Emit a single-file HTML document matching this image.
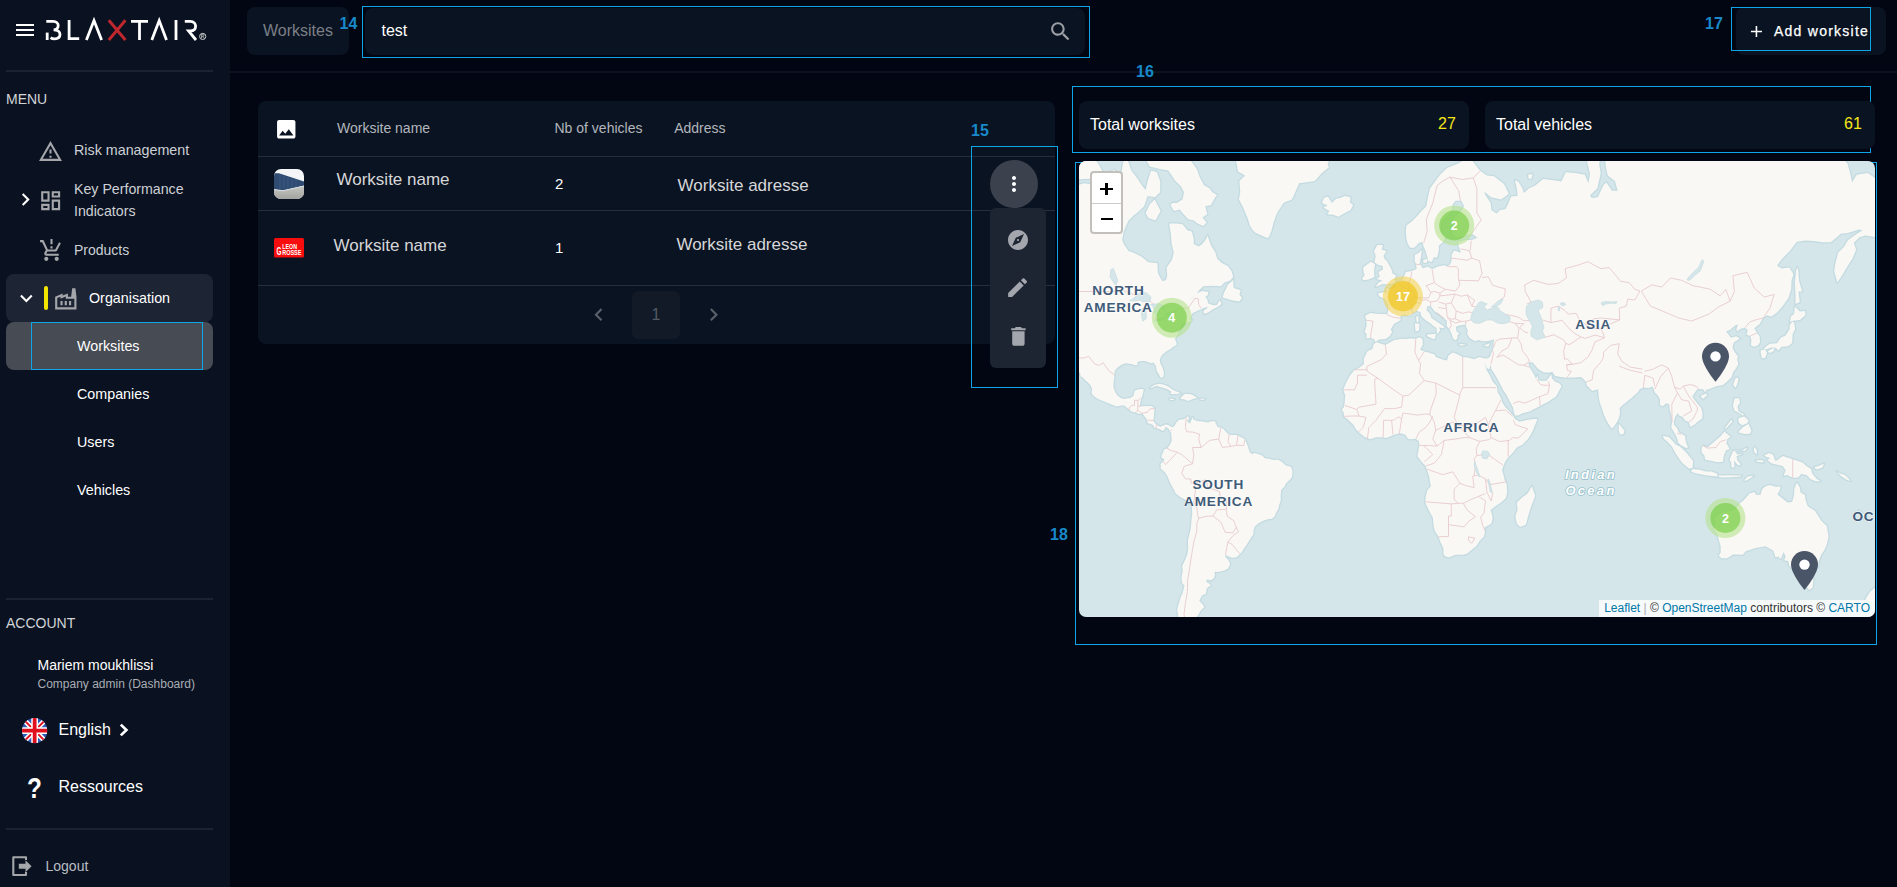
<!DOCTYPE html>
<html><head><meta charset="utf-8">
<style>
*{box-sizing:border-box;margin:0;padding:0}
html,body{width:1897px;height:887px;overflow:hidden;background:#020613;font-family:"Liberation Sans",sans-serif}
.t{position:absolute;white-space:nowrap;line-height:1}
svg.i{position:absolute;overflow:visible}
.side{position:absolute;left:0;top:0;width:230px;height:887px;background:#0a1221}
.dv{position:absolute;left:6px;width:207px;height:2px;background:#1b2230}
.bl{position:absolute;border:1.3px solid #0ea5e9}
.lb{position:absolute;font-weight:700;font-size:16px;line-height:1;color:#1889c9;white-space:nowrap}
.card{position:absolute;background:#0a1321;border-radius:8px}
.rl{position:absolute;left:258px;width:797px;height:1px;background:#272e3b}
</style></head><body>
<!-- SIDEBAR -->
<div class="side">
  <svg class="i" style="left:13px;top:18px" width="24" height="24" viewBox="0 0 24 24"><path fill="#fff" d="M3 18h18v-2H3v2zm0-5h18v-2H3v2zm0-7v2h18V6H3z"/></svg>
  <svg class="i" style="left:0;top:0" width="230" height="60" viewBox="0 0 230 60"><g fill="none" stroke="#fff" stroke-width="2.8" stroke-linecap="butt">
<path d="M46.3,21.4 H53.2 C56.4,21.4 58.2,23.4 58.2,25.6 C58.2,28 56.4,29.9 53.6,29.9 C57.6,29.9 60,31.9 60,34.6 C60,37.4 57.6,38.8 54.6,38.8 C53,38.8 51.6,38.4 50.6,37.6"/>
<path d="M47.2,32.6 V40"/>
<path d="M69.1,20 V38.6 H79.2"/>
<path d="M86.4,40 L94,20.6 L101.6,40"/>
<path d="M131,21.4 H148 M139.5,21.4 V40"/>
<path d="M151.8,40 L159.2,20.6 L166.5,40"/>
<path d="M176,20 V40"/>
<path d="M184.8,21.4 H190.2 C193.9,21.4 195.6,23.8 195.6,26.3 C195.6,28.9 193.8,31 190.4,31 H188.6 L196,40"/>
</g>
<path d="M108.8,20.2 L125.4,40 M125.4,20.2 L108.8,40" stroke="#c1272d" stroke-width="2.9" fill="none"/>
<circle cx="202.7" cy="36.4" r="3.1" fill="none" stroke="#ddd" stroke-width="0.9"/>
<path d="M201.6,38.4 V34.4 H203 C204,34.4 204.2,36.3 203,36.3 H201.6 M203,36.3 L204.2,38.4" fill="none" stroke="#ddd" stroke-width="0.7"/>
</svg>

  <div class="dv" style="top:70px"></div>
  <div class="t" style="left:6px;top:92px;font-size:14px;color:#d2d4d8">MENU</div>

  <svg class="i" style="left:38px;top:138.5px" width="25" height="25" viewBox="0 0 24 24"><path fill="#a4a6aa" d="M12 5.99L19.53 19H4.47L12 5.99M12 2L1 21h22L12 2zm1 14h-2v2h2v-2zm0-6h-2v4h2v-4z"/></svg>
  <div class="t" style="left:74px;top:143px;font-size:14.3px;color:#cdd0d5">Risk management</div>

  <svg class="i" style="left:13px;top:187.3px" width="25" height="25" viewBox="0 0 24 24"><path fill="#fff" d="M10 6L8.59 7.41 13.17 12l-4.58 4.59L10 18l6-6z"/></svg>
  <svg class="i" style="left:37.8px;top:187.6px" width="25.3" height="25.3" viewBox="0 0 24 24"><path fill="#a4a6aa" d="M19 5v2h-4V5h4M9 5v6H5V5h4m10 8v6h-4v-6h4M9 17v2H5v-2h4M21 3h-8v6h8V3zM11 3H3v10h8V3zm10 8h-8v10h8V11zm-10 4H3v6h8v-6z"/></svg>
  <div class="t" style="left:74px;top:182px;font-size:14.2px;color:#cdd0d5">Key Performance</div>
  <div class="t" style="left:74px;top:204px;font-size:14.2px;color:#cdd0d5">Indicators</div>

  <svg class="i" style="left:39px;top:238.3px" width="25" height="25" viewBox="0 0 24 24"><path fill="#a4a6aa" d="M13 10h-2V8h2v2zm0-4h-2V1h2v5zM7 18c-1.1 0-1.99.9-1.99 2S5.9 22 7 22s2-.9 2-2-.9-2-2-2zm10 0c-1.1 0-1.99.9-1.99 2s.89 2 1.99 2 2-.9 2-2-.9-2-2-2zm-8.9-5h7.45c.75 0 1.41-.41 1.75-1.03L21 4.96 19.25 4l-3.7 7H8.53L4.27 2H1v2h2l3.6 7.59-1.35 2.44C4.52 15.37 5.48 17 7 17h12v-2H7l1.1-2z"/></svg>
  <div class="t" style="left:74px;top:243px;font-size:14px;color:#cdd0d5">Products</div>

  <div style="position:absolute;left:6px;top:274px;width:207px;height:48px;background:#1d2434;border-radius:8px"></div>
  <svg class="i" style="left:13.6px;top:285.7px" width="24.7" height="24.7" viewBox="0 0 24 24"><path fill="#fff" d="M16.59 8.59L12 13.17 7.41 8.59 6 10l6 6 6-6z"/></svg>
  <div style="position:absolute;left:44px;top:286px;width:3.5px;height:24px;background:#f2e600;border-radius:2px"></div>
  <svg class="i" style="left:52.7px;top:285.6px" width="25.6" height="25.6" viewBox="0 0 24 24"><path fill="#a4a6aa" d="M22,22H2V10l7-3v2l5-2l0,3h3l1-8h3l1,8V22z M12,9.95l-5,2V10l-3,1.32V20h16v-8h-8L12,9.95z M11,18h2v-4h-2V18z M7,18h2v-4H7V18z M17,14h-2v4h2V14z"/></svg>
  <div class="t" style="left:89px;top:291px;font-size:14.3px;color:#fff">Organisation</div>

  <div style="position:absolute;left:6px;top:322px;width:207px;height:48px;background:#464b54;border-radius:8px"></div>
  <div class="bl" style="left:31px;top:322px;width:172px;height:48px"></div>
  <div class="t" style="left:77px;top:338.7px;font-size:14.3px;color:#fff">Worksites</div>
  <div class="t" style="left:77px;top:386.7px;font-size:14.3px;color:#fff">Companies</div>
  <div class="t" style="left:77px;top:434.7px;font-size:14.3px;color:#fff">Users</div>
  <div class="t" style="left:77px;top:482.7px;font-size:14.3px;color:#fff">Vehicles</div>

  <div class="dv" style="top:598px"></div>
  <div class="t" style="left:6px;top:616px;font-size:14px;color:#d2d4d8">ACCOUNT</div>
  <div class="t" style="left:37.5px;top:657.8px;font-size:14px;color:#fff">Mariem moukhlissi</div>
  <div class="t" style="left:37.5px;top:678.4px;font-size:12px;color:#a9adb4">Company admin (Dashboard)</div>

  <svg class="i" style="left:21.7px;top:717.9px" width="25.3" height="25.3" viewBox="0 0 60 60"><defs><clipPath id="fc"><circle cx="30" cy="30" r="30"/></clipPath></defs>
<g clip-path="url(#fc)"><rect width="60" height="60" fill="#2f5cba"/>
<path d="M0,0 L60,60 M60,0 L0,60" stroke="#fff" stroke-width="12"/>
<path d="M0,0 L60,60 M60,0 L0,60" stroke="#e0101f" stroke-width="4.5"/>
<path d="M30,0 V60 M0,30 H60" stroke="#fff" stroke-width="16"/>
<path d="M30,0 V60 M0,30 H60" stroke="#e0101f" stroke-width="9"/></g></svg>

  <div class="t" style="left:58.5px;top:722.2px;font-size:16px;color:#fff">English</div>
  <svg class="i" style="left:0;top:700px" width="140" height="50" viewBox="0 700 140 50"><path d="M120.8,724.6 L126.4,730 L120.8,735.4" fill="none" stroke="#fff" stroke-width="2.7"/></svg>
  <div class="t" style="left:27px;top:774px;font-size:29px;font-weight:700;color:#fff;transform:scaleX(0.84);transform-origin:0 0">?</div>
  <div class="t" style="left:58.5px;top:779.3px;font-size:16px;color:#fff">Ressources</div>

  <div class="dv" style="top:828px"></div>
  <svg class="i" style="left:0;top:840px" width="40" height="45" viewBox="0 840 40 45"><path d="M26,860 V857.3 H13.3 V875 H26 V872" fill="none" stroke="#a4a6aa" stroke-width="2.1" stroke-linejoin="round"/><path d="M18.8,863.7 H25.5 V860.2 L31.6,866.2 L25.5,872.2 V868.7 H18.8 Z" fill="#a4a6aa"/></svg>
  <div class="t" style="left:45.5px;top:859.4px;font-size:14px;color:#b9bcc2">Logout</div>
</div>

<!-- HEADER -->
<div style="position:absolute;left:230px;top:71px;width:1667px;height:2px;background:#0b1320"></div>
<div class="card" style="left:247px;top:7px;width:102px;height:48px"></div>
<div class="t" style="left:263px;top:22.5px;font-size:16px;color:#7b7f87">Worksites</div>
<div class="lb" style="left:339.5px;top:16px">14</div>
<div class="bl" style="left:362px;top:6px;width:728px;height:52px"></div>
<div class="card" style="left:365px;top:8px;width:720px;height:47px"></div>
<div class="t" style="left:381.5px;top:22.5px;font-size:16px;color:#fff">test</div>
<svg class="i" style="left:1047.9px;top:18.5px" width="25" height="25" viewBox="0 0 24 24"><path fill="#9b9ea4" d="M15.5 14h-.79l-.28-.27C15.41 12.59 16 11.110 16 9.5 16 5.91 13.09 3 9.5 3S3 5.91 3 9.5 5.91 16 9.5 16c1.61 0 3.09-.59 4.23-1.57l.27.28v.79l5 4.99L20.49 19l-4.99-5zm-6 0C7.01 14 5 11.99 5 9.5S7.01 5 9.5 5 14 7.01 14 9.5 11.99 14 9.5 14z"/></svg>

<div class="lb" style="left:1705px;top:16px">17</div>
<div class="card" style="left:1736px;top:7px;width:150px;height:48px"></div>
<div class="bl" style="left:1731px;top:7px;width:140px;height:44px"></div>
<svg class="i" style="left:1747px;top:22.1px" width="18.9" height="18.9" viewBox="0 0 24 24"><path fill="#fff" d="M19 13h-6v6h-2v-6H5v-2h6V5h2v6h6v2z"/></svg>
<div class="t" style="left:1774px;top:24.1px;font-size:14px;font-weight:400;letter-spacing:1.25px;color:#fff;-webkit-text-stroke:0.25px #fff">Add worksite</div>

<!-- TABLE -->
<div class="card" style="left:258px;top:101px;width:797px;height:243px"></div>
<svg class="i" style="left:273.7px;top:116.9px" width="24.5" height="24.5" viewBox="0 0 24 24"><path fill="#fff" d="M21 19V5c0-1.1-.9-2-2-2H5c-1.1 0-2 .9-2 2v14c0 1.1.9 2 2 2h14c1.1 0 2-.9 2-2zM8.5 13.5l2.5 3.01L14.5 12l4.5 6H5l3.5-4.5z"/></svg>
<div class="t" style="left:337px;top:121.4px;font-size:14px;color:#b3b6bc">Worksite name</div>
<div class="t" style="left:554.5px;top:121.4px;font-size:14px;color:#b3b6bc">Nb of vehicles</div>
<div class="t" style="left:674.2px;top:121.4px;font-size:14px;color:#b3b6bc">Address</div>
<div class="rl" style="top:156px"></div>
<svg class="i" style="left:274px;top:169px" width="30" height="30" viewBox="0 0 30 30"><defs><clipPath id="tc"><rect width="30" height="30" rx="7"/></clipPath><linearGradient id="tg" x1="0" y1="0" x2="0" y2="1"><stop offset="0" stop-color="#c6c6c2"/><stop offset="1" stop-color="#a3a3a0"/></linearGradient></defs>
<g clip-path="url(#tc)"><rect width="30" height="30" fill="#f3f5f7"/>
<path d="M0,4.2 L5,4.2 L30,12.5 L30,16.8 L9,21.5 L0,20.5Z" fill="#2f4b72"/>
<path d="M6,5 V21 M10,6.5 V20.5 M14,8 V19.8 M18,9.2 V19 M22,10.5 V18.4" stroke="#3d5d86" stroke-width="0.8"/>
<path d="M0,20.5 L9,21.5 L30,16.8 L30,30 L0,30Z" fill="url(#tg)"/>
<path d="M0,20.5 L9,21.8 L30,17" stroke="#d8dde0" stroke-width="1" fill="none"/>
</g></svg>

<div class="t" style="left:336.5px;top:171.2px;font-size:17px;color:#d6d7d9">Worksite name</div>
<div class="t" style="left:555px;top:175.5px;font-size:15px;color:#fff">2</div>
<div class="t" style="left:677.6px;top:177.2px;font-size:17px;color:#d6d7d9">Worksite adresse</div>
<div class="rl" style="top:210px"></div>
<svg class="i" style="left:274px;top:238px" width="30" height="19.5" viewBox="0 0 30 19.5"><rect width="30" height="19.5" rx="1.5" fill="#f70d0d"/>
<text x="8.2" y="10.8" style="font:700 7.4px 'Liberation Sans'" fill="#fff" textLength="14.8" lengthAdjust="spacingAndGlyphs">LEON</text>
<text x="2.6" y="17" style="font:700 11px 'Liberation Sans'" fill="#fff" textLength="5" lengthAdjust="spacingAndGlyphs">G</text>
<text x="8.2" y="17" style="font:700 7.6px 'Liberation Sans'" fill="#fff" textLength="19.2" lengthAdjust="spacingAndGlyphs">ROSSE</text>
</svg>

<div class="t" style="left:333.6px;top:237.2px;font-size:17px;color:#d6d7d9">Worksite name</div>
<div class="t" style="left:555px;top:240.1px;font-size:15px;color:#fff">1</div>
<div class="t" style="left:676.4px;top:236.4px;font-size:17px;color:#d6d7d9">Worksite adresse</div>
<div class="rl" style="top:285px"></div>
<svg class="i" style="left:585.8px;top:302.2px" width="25.4" height="25.4" viewBox="0 0 24 24"><path fill="#5a6069" d="M15.41 16.59L10.83 12l4.58-4.59L14 6l-6 6 6 6 1.41-1.41z"/></svg>
<div style="position:absolute;left:632px;top:291px;width:48px;height:48px;background:#111a26;border-radius:6px"></div>
<div class="t" style="left:651.5px;top:307px;font-size:16px;color:#535a64">1</div>
<svg class="i" style="left:700.5px;top:302.2px" width="25.4" height="25.4" viewBox="0 0 24 24"><path fill="#5a6069" d="M8.59 16.59L13.17 12 8.59 7.41 10 6l6 6-6 6-1.41-1.41z"/></svg>

<div class="lb" style="left:971px;top:123px">15</div>
<div class="bl" style="left:971px;top:146px;width:87px;height:242px"></div>
<div style="position:absolute;left:990px;top:160px;width:48px;height:48px;border-radius:24px;background:#3c424d"></div>
<svg class="i" style="left:1002.4px;top:172px" width="24" height="24" viewBox="0 0 24 24"><path fill="#fff" d="M12 8c1.1 0 2-.9 2-2s-.9-2-2-2-2 .9-2 2 .9 2 2 2zm0 2c-1.1 0-2 .9-2 2s.9 2 2 2 2-.9 2-2-.9-2-2-2zm0 6c-1.1 0-2 .9-2 2s.9 2 2 2 2-.9 2-2-.9-2-2-2z"/></svg>
<div style="position:absolute;left:990px;top:208px;width:56px;height:160px;background:#1d2432;border-radius:6px"></div>
<svg class="i" style="left:1006px;top:228px" width="24" height="24" viewBox="0 0 24 24"><path fill="#a3a6ac" d="M12 10.9c-.61 0-1.1.49-1.1 1.1s.49 1.1 1.1 1.1c.61 0 1.1-.49 1.1-1.1s-.49-1.1-1.1-1.1zM12 2C6.48 2 2 6.48 2 12s4.48 10 10 10 10-4.48 10-10S17.52 2 12 2zm2.19 12.19L6 18l3.81-8.19L18 6l-3.81 8.19z"/></svg>
<svg class="i" style="left:1005.3px;top:275.3px" width="25.2" height="25.2" viewBox="0 0 24 24"><path fill="#a3a6ac" d="M3 17.25V21h3.75L17.81 9.94l-3.75-3.75L3 17.25zM20.71 7.04c.39-.39.39-1.02 0-1.41l-2.34-2.34c-.39-.39-1.02-.39-1.41 0l-1.83 1.83 3.75 3.75 1.83-1.83z"/></svg>
<svg class="i" style="left:1005.5px;top:323.6px" width="24.8" height="24.8" viewBox="0 0 24 24"><path fill="#a3a6ac" d="M6 19c0 1.1.9 2 2 2h8c1.1 0 2-.9 2-2V7H6v12zM19 4h-3.5l-1-1h-5l-1 1H5v2h14V4z"/></svg>

<!-- STATS -->
<div class="lb" style="left:1136px;top:64px">16</div>
<div class="bl" style="left:1072px;top:86px;width:799px;height:67px"></div>
<div class="card" style="left:1079px;top:101px;width:390px;height:48px"></div>
<div class="t" style="left:1090px;top:116.5px;font-size:16px;color:#fff">Total worksites</div>
<div class="t" style="left:1438px;top:116.1px;font-size:16px;color:#f5e61a">27</div>
<div class="card" style="left:1485px;top:101px;width:390px;height:48px"></div>
<div class="t" style="left:1496px;top:116.5px;font-size:16px;color:#fff">Total vehicles</div>
<div class="t" style="left:1844px;top:116.1px;font-size:16px;color:#f5e61a">61</div>

<div class="lb" style="left:1050px;top:527px">18</div>
<div class="bl" style="left:1075px;top:161.5px;width:802px;height:483.5px"></div>
<div style="position:absolute;left:1079px;top:161px;width:796px;height:456px;overflow:hidden;border-radius:7px;background:#d4e6ea"><svg width="796" height="456" viewBox="0 0 796 456" style="position:absolute;left:0;top:0"><path d="M-28.7,12.1L-11.7,21.6L-0.3,23.9L5.4,22.3L16.8,23.9L25.3,26.1L33.8,25.4L39.5,21.6L42.4,12.1L45.2,-5.0L49.5,1.2L52.3,9.6L58.0,16.9L63.7,25.4L66.6,29.1L69.4,17.7L72.2,9.6L77.9,11.3L81.3,20.8L81.1,31.3L75.9,36.3L68.5,34.9L65.1,45.3L58.0,51.9L54.6,54.5L49.5,59.5L44.7,70.4L43.2,79.0L44.7,82.9L49.5,89.9L55.2,92.0L62.3,95.6L69.4,101.2L78.5,102.2L78.8,111.4L80.8,116.1L83.6,120.3L87.0,118.9L88.2,114.7L87.6,106.6L93.0,98.7L94.7,91.5L92.7,82.9L91.9,73.3L90.2,62.6L97.8,62.6L103.5,63.2L108.4,69.2L112.9,70.4L114.9,79.0L114.6,82.9L119.7,85.6L123.4,82.9L127.1,77.9L128.6,74.5L132.0,84.5L136.2,90.9L138.2,97.7L142.5,101.7L149.0,105.2L152.5,110.0L154.2,116.1L150.8,119.8L145.3,121.6L141.9,125.2L133.4,124.8L124.3,125.2L120.6,128.7L116.3,133.9L112.1,138.1L110.6,139.4L113.5,136.9L117.8,132.2L123.4,130.0L129.7,130.9L128.3,134.8L126.3,135.6L128.3,138.6L129.1,142.3L133.4,143.9L137.7,144.3L140.8,139.0L142.5,143.1L138.5,145.9L133.4,148.4L129.1,151.5L125.4,153.1L124.3,150.0L129.7,145.9L124.9,146.8L121.5,148.4L117.8,150.0L113.5,152.3L111.5,156.2L112.1,159.7L113.6,158.7L111.5,160.8L107.8,162.0L103.2,163.1L102.1,164.6L101.8,167.6L99.6,170.5L99.0,172.7L96.7,177.0L95.6,177.4L97.3,180.9L97.8,183.7L94.7,185.4L91.0,188.2L87.3,190.6L83.6,193.6L81.6,196.3L80.8,199.6L81.6,202.9L83.6,206.8L84.9,211.6L84.5,215.4L83.3,216.7L81.6,216.4L79.9,213.5L77.4,209.1L77.1,205.2L74.5,201.6L71.4,202.3L69.4,200.9L65.7,200.0L61.7,200.0L58.3,200.9L58.6,203.9L56.0,204.2L52.3,202.9L46.6,202.3L42.9,203.6L38.1,207.1L35.6,210.3L35.6,214.5L34.7,219.8L34.4,225.7L36.1,230.9L38.7,234.8L41.8,236.9L44.7,238.1L48.6,237.2L51.5,236.9L54.6,234.5L55.5,230.0L57.7,228.8L61.7,227.9L64.8,228.2L64.0,232.1L63.1,236.0L62.0,237.8L61.7,240.2L60.6,245.0L63.4,245.3L68.3,245.0L72.8,245.3L75.7,247.6L75.1,252.0L74.8,256.7L74.2,259.3L75.9,262.2L78.8,264.5L81.1,265.7L84.5,264.5L86.5,263.4L89.3,263.9L92.4,266.0L94.1,266.2L95.9,264.2L97.6,261.3L99.3,259.3L101.5,258.4L104.1,258.4L107.2,256.7L108.7,255.3L110.4,257.6L108.1,259.3L108.9,261.1L110.6,262.8L112.1,259.9L113.5,255.8L114.1,258.2L118.0,259.9L124.0,260.5L129.1,261.6L132.0,260.2L136.2,260.2L136.8,262.8L139.1,266.2L141.9,266.5L144.8,268.3L147.1,271.1L150.2,273.7L153.6,274.0L157.6,274.0L160.7,275.4L163.8,277.1L166.1,278.8L167.5,282.3L169.0,285.7L170.1,289.4L170.4,290.8L173.2,293.4L174.6,291.9L177.5,292.5L183.2,294.5L186.3,297.6L189.2,297.6L194.6,299.1L199.1,298.8L203.1,301.0L206.8,304.5L210.2,305.3L212.5,306.5L213.6,311.6L212.8,316.5L210.8,318.8L207.1,322.3L205.4,325.8L202.2,328.7L201.7,333.4L201.7,339.9L200.2,343.8L199.4,348.0L197.1,351.6L196.0,355.0L193.1,357.7L189.7,358.1L185.5,359.3L182.6,360.5L178.9,362.7L175.5,365.9L174.6,369.0L174.4,373.5L172.4,376.1L169.8,380.3L167.8,383.6L165.3,387.0L163.0,391.0L160.4,393.4L158.4,395.8L155.0,396.8L151.9,396.5L148.5,395.1L146.5,393.7L146.2,395.8L149.0,398.6L150.5,401.7L151.3,402.8L149.0,407.5L145.3,409.6L139.1,411.1L135.4,410.7L136.0,414.0L135.1,417.0L132.0,419.3L127.7,418.5L127.4,421.1L130.6,422.7L131.7,425.0L129.1,426.1L127.7,427.7L126.9,432.8L122.9,434.4L120.3,439.7L123.4,443.0L125.4,446.0L121.5,449.8L119.7,453.3L117.5,456.4L116.3,460.0L118.3,465.9L119.2,478.9L99.3,478.9L99.3,455.5L98.1,449.0L99.8,442.6L101.5,436.5L103.8,431.6L105.5,424.6L103.0,421.9L102.4,417.0L103.8,409.6L103.2,404.9L106.1,398.9L108.4,393.1L109.2,387.0L108.9,380.3L109.8,375.4L111.2,370.6L112.1,364.3L112.4,359.6L113.2,353.4L112.9,345.9L112.4,343.8L109.2,340.8L105.0,338.1L100.7,335.7L96.7,332.5L95.3,329.6L93.0,325.2L90.7,320.8L88.5,315.6L86.2,311.6L83.6,309.3L81.6,307.6L81.9,304.8L81.3,303.3L84.2,300.5L85.6,297.9L82.5,297.1L82.5,294.2L83.9,291.7L85.0,288.5L87.9,287.4L89.3,286.0L91.0,283.4L92.7,280.0L92.4,275.1L92.2,271.7L90.7,270.0L89.6,267.7L86.5,265.4L86.2,267.4L83.9,270.0L81.6,268.8L78.8,267.4L74.8,266.5L74.5,264.2L71.1,262.8L68.8,262.2L68.3,259.6L66.8,257.0L64.3,253.8L63.4,252.3L60.6,252.9L57.7,252.0L54.6,250.9L52.0,250.3L50.1,248.8L47.5,246.2L45.2,244.4L42.4,244.4L38.4,245.6L35.0,244.4L31.9,243.2L28.2,241.7L23.9,239.9L20.2,238.4L17.9,237.2L15.4,235.4L12.8,232.7L12.8,229.7L13.1,227.9L11.7,224.8L9.4,222.0L6.0,218.9L4.0,216.4L1.7,215.4L1.1,212.3L-1.7,209.1L-3.7,207.8L-7.4,202.9L-13.9,195.6L-43.0,184.4L-43.0,12.1ZM404.5,197.3L400.8,196.0L397.9,197.0L395.1,198.3L389.4,196.6L383.7,196.0L378.0,193.0L373.8,191.6L369.5,194.6L368.1,199.6L363.8,198.6L356.7,196.0L355.8,193.6L349.6,191.6L345.3,190.6L341.0,188.5L343.9,183.7L343.6,178.1L340.5,176.3L336.8,177.7L331.1,177.4L326.8,178.1L321.1,178.1L315.4,179.1L309.8,182.0L306.3,184.1L297.5,181.3L295.0,182.7L293.3,187.9L288.4,190.2L284.7,198.0L285.0,202.9L279.9,207.1L275.6,209.1L271.4,213.9L267.4,221.1L264.2,228.8L266.2,234.2L265.7,241.7L264.8,246.2L262.8,248.5L264.8,252.0L265.1,255.8L268.5,257.9L271.1,260.8L274.8,264.2L277.0,268.5L280.7,272.0L285.6,276.0L291.3,278.3L297.0,276.3L302.6,276.3L307.5,277.1L314.0,274.3L318.3,272.8L322.6,272.6L326.3,273.7L329.1,278.0L332.5,278.3L336.8,277.7L339.6,280.0L340.5,283.7L339.6,288.0L339.1,292.2L338.2,295.1L342.5,300.8L346.2,304.5L347.6,307.9L350.1,315.1L351.0,320.8L351.9,325.2L348.2,329.6L346.7,335.4L346.2,341.4L349.6,348.9L353.8,356.5L354.7,365.9L356.1,370.6L359.5,375.8L361.8,382.0L364.4,387.0L364.4,392.0L365.2,394.8L369.5,396.5L376.6,393.7L383.7,393.7L388.0,392.7L392.2,389.3L397.9,384.6L400.8,379.7L405.0,375.4L406.2,369.0L405.3,366.8L412.2,362.7L413.6,358.1L413.0,353.4L411.6,348.9L416.4,345.3L422.1,341.4L426.9,336.9L428.1,332.5L427.8,323.7L425.8,319.4L424.4,313.6L423.0,309.3L424.4,305.0L426.4,300.2L429.2,296.5L433.5,292.2L437.8,286.5L443.4,283.7L449.1,278.0L453.4,270.8L456.2,263.7L458.5,257.9L454.8,257.9L449.1,258.7L440.6,260.8L436.0,257.9L434.3,255.0L430.6,250.6L426.4,246.2L423.5,241.7L422.1,237.2L418.7,231.2L417.8,225.1L413.6,220.4L410.7,214.2L407.9,209.4L405.3,201.6ZM386.0,-1.4L378.0,2.9L368.1,7.1L361.0,13.7L355.3,21.6L351.0,27.6L349.0,36.3L347.3,45.3L342.5,49.9L338.2,55.1L332.5,60.8L327.4,64.4L326.8,70.4L327.4,77.3L328.5,82.3L331.1,86.7L335.4,86.7L339.6,82.3L342.8,80.7L343.9,82.3L344.5,85.6L346.4,89.4L348.2,95.6L349.3,100.2L353.0,100.7L354.7,96.6L358.1,96.6L359.8,89.9L359.8,84.5L364.7,80.7L366.4,75.0L361.8,70.4L362.1,61.4L368.1,55.1L372.3,50.6L373.8,43.3L376.6,39.8L382.3,39.8L385.1,45.3L382.3,49.9L376.6,55.1L373.2,59.5L373.8,68.6L373.2,73.3L376.6,76.2L380.9,76.2L388.0,73.9L393.7,73.3L398.5,76.7L392.8,79.0L386.6,79.0L379.4,80.7L379.4,84.5L382.0,91.5L380.9,91.5L375.2,89.4L372.6,93.6L372.6,99.2L371.2,103.2L368.1,105.6L365.5,104.2L359.5,105.2L353.3,108.1L348.2,105.6L343.9,107.6L342.5,104.7L340.5,103.2L341.9,96.6L342.8,88.8L339.6,92.0L335.9,93.6L335.6,99.7L337.1,103.2L337.6,108.1L332.5,110.0L326.8,110.9L325.4,114.7L322.8,119.8L319.7,121.2L317.2,122.1L316.9,125.2L313.2,127.4L309.5,128.7L308.9,127.4L307.2,127.4L308.0,131.8L304.1,131.3L298.9,132.6L300.4,135.6L305.5,137.7L306.9,139.8L309.2,143.9L309.2,149.2L308.3,153.1L302.6,153.1L297.0,152.7L291.3,151.9L286.1,154.7L287.3,158.9L287.6,164.6L285.6,170.9L287.6,173.1L287.3,177.4L291.6,176.7L294.7,178.1L296.7,180.9L299.8,178.4L306.6,178.1L310.6,175.2L313.2,170.9L311.7,168.3L315.2,162.7L321.7,159.3L321.4,155.1L325.4,153.5L331.1,154.7L333.9,151.9L337.6,149.6L341.6,151.5L342.5,155.5L346.7,159.3L351.0,162.0L355.3,165.7L357.3,166.8L358.1,172.0L357.0,173.8L359.5,172.0L361.2,168.7L359.8,166.5L364.9,167.2L365.2,165.7L358.1,160.8L352.4,157.0L351.3,153.1L347.6,149.2L347.9,145.5L351.6,144.7L353.0,146.8L355.8,150.4L359.5,153.1L365.2,157.4L367.8,159.7L367.8,165.3L370.3,168.3L372.6,172.7L374.0,177.4L376.6,179.5L378.6,177.0L378.3,173.8L380.9,173.1L377.5,170.2L376.9,165.7L380.3,164.6L386.6,163.5L387.1,165.3L387.4,166.5L388.8,169.4L388.0,172.3L390.3,176.7L392.2,178.1L396.5,180.2L399.4,179.1L403.6,180.2L409.3,179.9L413.6,178.8L415.3,178.1L414.4,182.7L414.7,186.1L413.6,189.6L412.4,191.9L410.7,196.3L407.9,197.6L404.5,197.3L405.3,201.6L407.9,207.1L410.2,208.4L411.9,202.9L412.2,207.8L416.4,214.2L419.3,219.5L423.0,226.6L424.1,229.1L427.8,234.2L430.6,240.2L433.8,245.9L435.8,254.4L439.2,254.4L443.4,252.3L450.6,250.6L456.2,247.6L461.1,245.0L464.8,242.9L469.6,240.5L473.6,237.8L476.7,236.0L479.3,231.5L482.7,225.1L479.9,222.0L476.2,220.8L473.0,217.6L472.5,213.5L470.5,215.7L467.6,219.8L461.9,219.8L459.4,219.5L458.5,213.9L457.1,217.9L455.4,214.2L453.4,210.7L450.6,206.2L449.1,201.6L453.4,201.3L456.2,204.5L459.1,208.1L464.8,211.6L470.5,211.6L473.3,210.7L476.2,215.1L481.8,216.1L487.5,216.7L494.6,216.4L501.8,216.1L504.6,217.9L506.9,221.1L508.3,225.7L509.2,225.4L513.1,230.0L517.4,228.8L519.1,228.2L519.7,235.7L520.8,241.7L522.5,246.2L524.8,253.5L526.8,257.9L529.3,262.8L533.0,267.7L535.0,265.4L537.9,261.3L539.6,257.9L541.0,252.6L540.7,247.0L544.4,243.5L546.7,241.7L551.5,237.8L556.7,233.3L559.8,230.3L560.6,228.2L564.3,226.6L569.5,226.9L573.7,225.4L574.9,229.1L576.0,231.8L578.8,234.2L581.1,238.7L580.8,244.1L584.0,245.3L587.1,242.3L590.2,243.2L590.8,249.1L592.5,255.0L593.1,261.3L592.2,266.5L595.6,272.3L597.9,276.6L599.3,281.7L601.3,283.7L607.0,287.1L609.0,286.5L606.7,280.3L606.1,275.1L602.7,272.8L599.9,271.4L597.9,266.8L595.1,263.9L594.8,259.9L596.8,255.0L598.8,252.0L599.9,254.4L603.9,256.1L605.6,259.3L609.8,261.1L611.3,266.0L615.5,263.7L618.4,261.1L623.2,257.6L623.5,252.0L622.1,246.8L618.1,242.3L615.5,238.7L613.3,235.7L616.1,231.2L618.4,228.2L621.2,227.9L624.6,228.5L626.1,231.8L626.9,229.1L630.6,227.9L635.4,226.0L638.3,225.1L644.0,223.9L646.8,221.7L650.2,218.6L652.8,215.7L653.9,211.6L656.8,207.8L659.3,202.9L658.2,198.6L659.1,195.6L656.2,191.9L653.4,186.8L654.8,181.6L660.8,177.4L657.3,175.2L651.9,176.7L649.7,173.8L647.1,170.2L650.8,169.1L656.2,164.6L659.1,163.5L657.3,168.3L658.5,170.5L661.0,167.9L665.9,166.8L668.7,168.7L667.6,173.8L671.3,174.9L672.4,179.1L671.9,184.4L675.3,185.8L679.5,184.1L681.0,180.9L680.7,175.6L678.1,172.0L675.3,167.2L681.0,162.7L683.8,157.0L688.1,154.3L692.3,155.8L698.0,151.5L703.7,145.1L709.4,136.9L712.2,128.3L712.5,119.3L714.5,113.3L710.3,106.6L702.9,107.6L698.0,104.7L702.3,98.7L710.8,89.9L717.9,80.7L726.5,79.6L735.0,80.1L743.5,81.2L751.8,81.2L757.8,76.2L761.7,72.7L768.8,71.9L779.7,68.6L783.6,69.2L776.2,73.9L769.1,79.0L764.9,86.1L759.2,91.5L756.3,102.7L755.2,110.0L758.3,121.6L762.9,114.7L767.7,106.6L773.4,97.7L777.1,88.8L774.8,81.8L780.5,76.2L786.2,74.5L797.0,76.2L807.5,65.6L824.6,45.3L824.6,23.9L810.4,20.0L797.0,17.7L788.8,12.1L777.7,13.7L773.1,21.6L771.1,12.1L768.3,2.0L753.5,-9.5L739.3,-9.5L682.4,-9.5L625.5,-29.0L540.2,-19.0L525.9,-14.2L525.9,-5.0L526.8,6.3L528.8,14.5L535.9,20.0L538.7,29.8L533.0,29.8L527.4,21.6L524.5,23.9L518.8,36.3L512.6,37.0L511.1,34.2L518.3,27.6L521.7,12.1L520.2,3.8L521.1,-5.0L518.8,-19.0L513.1,-17.0L508.0,0.3L511.0,12.9L509.4,22.3L505.9,13.7L496.1,12.1L486.7,11.3L482.4,20.4L474.7,19.2L464.2,18.1L456.2,24.6L449.7,27.6L444.9,32.0L443.2,26.9L439.5,20.8L435.8,19.2L437.8,26.9L438.6,34.9L432.1,35.6L428.7,43.9L426.4,48.0L420.7,49.3L417.8,52.5L412.4,49.3L411.6,41.9L406.5,34.2L405.0,30.6L412.2,36.3L422.1,38.4L429.8,32.7L425.0,23.1L415.0,15.3L407.9,14.5L400.8,9.6L393.7,0.3ZM-23.0,16.1L-6.0,18.5L11.1,17.7L19.6,16.9L24.7,12.9L21.0,5.5L13.9,-5.0L-0.3,-9.5L-23.0,-19.0ZM28.7,19.2L39.5,20.8L41.0,13.7L35.3,8.8L29.6,12.1ZM91.3,43.9L95.0,49.9L100.7,48.6L103.5,51.9L109.2,58.3L114.9,59.5L118.6,62.6L124.3,65.0L127.7,61.4L123.4,56.4L128.3,53.2L126.3,45.3L132.0,43.9L136.2,36.3L138.2,34.2L133.4,31.3L130.6,27.6L124.9,23.9L120.6,16.1L117.8,8.0L113.5,2.0L107.8,-5.0L90.7,-19.0L56.6,-19.0L70.8,5.5L80.8,8.0L89.3,9.6L96.4,20.0L102.1,25.4L105.0,31.3L103.5,38.4L97.8,41.9L93.6,41.9ZM66.6,51.9L70.8,43.3L75.7,38.4L81.6,49.9L76.5,59.5L69.4,57.0ZM105.0,-76.3L119.2,-51.0L124.9,-45.2L147.6,-45.2L153.3,-19.0L156.2,-5.0L159.0,10.4L166.1,14.5L160.4,20.0L161.3,31.3L159.9,38.4L163.6,45.3L165.8,50.6L169.0,58.3L170.9,64.4L173.8,69.2L176.1,71.6L184.6,75.6L188.9,77.3L190.3,75.0L192.3,70.4L194.6,61.4L198.0,51.9L204.5,41.9L205.9,41.2L213.0,38.4L220.2,22.3L235.8,20.0L242.9,12.1L250.0,6.3L248.6,3.8L251.4,-5.0L255.7,-76.3ZM242.9,41.9L244.9,37.0L248.9,35.6L252.9,41.9L257.1,37.7L261.4,37.0L265.7,34.9L271.4,36.3L270.8,41.2L274.2,43.9L271.4,49.3L267.1,51.2L259.4,55.7L254.3,53.8L248.0,53.2L250.6,49.9L244.3,46.6L248.6,44.6ZM143.6,136.5L153.9,139.4L160.4,140.6L163.0,136.9L160.4,133.5L161.8,129.2L154.7,127.0L154.2,118.9L149.0,123.4L144.8,132.2ZM71.1,226.9L75.1,223.9L79.4,222.9L83.6,223.2L89.3,225.4L93.0,228.2L97.3,230.6L101.8,232.1L97.8,233.0L91.6,233.0L92.2,230.6L87.9,227.9L82.2,226.3L77.1,224.8L72.8,226.9ZM101.0,237.5L105.5,233.0L110.6,233.0L113.8,233.9L118.3,236.9L113.5,238.1L109.5,239.9L105.5,238.4L101.0,237.8ZM89.9,237.8L95.6,238.1L93.9,239.0L91.3,239.0ZM121.5,237.5L126.0,237.8L124.9,238.7L121.5,238.7ZM296.4,126.1L300.7,124.3L304.1,123.0L308.3,123.4L315.4,122.1L316.6,120.3L315.2,118.0L317.4,114.7L313.5,112.4L312.9,109.5L310.9,105.2L308.0,100.2L305.5,97.7L304.4,95.1L307.5,89.9L302.6,88.8L303.8,84.0L298.4,84.0L295.0,89.9L296.7,95.1L295.5,101.2L298.7,103.7L303.5,104.7L304.1,108.6L299.5,110.9L300.1,113.3L300.7,115.7L297.5,118.0L301.2,118.9L303.8,119.8L299.8,121.2ZM295.5,116.1L295.0,110.5L295.5,106.6L296.1,103.2L291.8,100.7L288.4,103.2L284.2,106.6L284.4,110.5L285.6,114.3L283.0,117.5L284.7,119.3L289.8,118.4L294.1,116.6ZM347.9,173.4L357.0,172.7L355.6,178.4L348.2,175.2ZM335.9,162.3L340.5,162.7L339.9,169.8L336.5,170.5ZM337.1,155.5L339.3,155.1L339.6,161.2L337.6,160.5ZM379.4,182.7L387.4,183.7L382.3,184.8ZM404.5,184.4L411.0,182.3L409.3,185.8ZM449.1,13.7L453.4,12.9L452.5,17.7L449.7,17.7ZM343.9,99.2L348.4,97.7L347.9,101.7L344.7,101.7ZM452.8,325.2L456.2,334.8L454.3,339.9L452.5,344.4L449.1,355.0L446.9,363.7L441.2,365.9L437.8,362.7L436.3,355.0L438.6,348.9L437.8,341.4L443.4,336.3L448.6,332.5L450.6,329.0ZM539.9,262.8L543.0,266.5L545.6,270.0L544.4,273.1L541.0,273.7L539.6,269.4ZM656.8,216.4L659.6,217.3L658.2,223.5L656.2,226.9L654.2,223.5ZM621.5,235.1L626.9,232.4L628.3,233.9L624.1,238.1ZM684.9,187.9L686.6,185.8L690.9,182.7L698.0,182.3L701.7,176.7L706.6,174.5L710.5,168.3L710.8,164.2L713.1,160.8L715.1,161.6L716.2,168.3L713.7,172.7L713.4,177.7L713.1,182.0L710.3,184.4L707.4,185.4L702.3,185.8L699.4,189.6L696.9,186.8L692.3,186.5L687.5,188.2ZM710.8,160.8L712.2,155.1L715.1,153.1L715.9,145.5L720.8,150.4L725.9,150.0L726.5,153.9L720.8,158.9L714.2,159.7ZM681.5,189.6L685.8,188.2L688.1,191.9L686.1,197.0L682.9,197.3L681.8,192.3ZM688.6,190.6L692.3,187.9L695.7,187.2L694.6,190.2L690.9,191.9ZM716.5,143.1L720.8,141.0L719.4,130.5L723.1,130.5L719.9,119.3L719.4,110.0L718.2,106.1L717.1,110.0L715.9,121.6L716.5,134.8ZM655.6,237.2L660.2,237.2L661.0,241.7L658.5,245.3L659.6,250.6L665.3,253.5L663.9,254.4L659.6,251.7L655.6,249.7L653.9,244.7ZM659.6,270.8L663.9,266.2L669.6,263.1L672.4,269.4L671.0,272.8L665.3,273.1L659.6,271.4ZM659.6,257.0L665.3,255.5L669.6,259.3L668.2,262.2L663.3,264.2L661.0,262.8L659.3,260.8ZM646.0,267.1L652.5,258.4L653.4,260.5L646.8,268.0ZM622.6,286.5L624.4,284.8L628.3,286.5L634.0,281.7L641.1,275.7L645.4,270.8L651.7,275.7L648.2,278.0L647.4,282.3L650.8,288.0L646.8,289.4L644.8,295.1L644.0,300.8L638.3,301.3L629.8,299.3L626.1,298.8L625.5,294.5L622.6,291.4ZM583.7,274.8L589.9,276.0L597.0,283.7L601.3,285.7L607.9,292.2L611.3,296.5L614.1,299.9L613.5,307.3L609.8,307.6L603.6,302.2L599.3,296.5L595.6,290.8L593.1,285.7L588.5,280.8L585.1,278.0ZM611.8,310.2L614.1,307.9L620.7,308.8L626.9,310.5L632.6,310.5L638.3,312.8L638.3,315.6L628.3,314.5L619.8,313.1L615.5,311.9ZM639.7,314.2L642.6,314.5L651.1,314.2L655.4,314.5L662.5,314.5L661.9,315.6L652.5,316.2L644.0,316.5L639.7,315.9ZM665.3,319.1L668.7,315.4L674.7,314.8L671.0,317.4L666.2,320.0ZM652.5,306.5L655.4,306.5L655.1,299.3L658.2,303.6L659.6,304.5L661.9,303.6L658.2,299.3L657.6,295.1L662.5,293.6L663.3,293.1L658.2,293.4L655.4,289.4L662.5,289.4L668.2,286.5L666.7,289.4L654.5,289.9L653.4,291.4L650.5,298.8L652.2,301.6ZM675.3,285.7L677.3,288.0L678.1,293.1L676.1,292.2L674.7,289.4ZM676.7,299.3L683.8,299.3L684.7,301.6L678.1,300.8ZM685.2,294.5L689.5,291.9L693.8,293.4L696.6,300.2L703.7,295.1L713.7,298.2L723.6,301.6L727.3,305.0L732.2,307.9L733.0,312.2L737.8,317.9L741.5,320.3L736.4,320.3L731.3,317.9L727.9,314.2L722.2,312.8L719.4,316.5L713.7,316.8L708.0,313.9L704.6,314.8L706.6,309.3L703.7,305.0L697.2,303.6L692.3,302.2L688.1,298.8L691.5,297.3L686.6,295.4ZM735.0,306.5L739.3,305.0L745.0,302.8L743.5,306.5L737.8,308.5ZM757.8,310.2L760.6,312.2L766.3,314.2L770.0,317.9L771.4,320.0L767.7,318.8L762.0,315.1ZM779.7,349.5L783.4,351.9L787.6,355.9L786.2,356.5L781.4,352.8ZM635.4,356.5L637.4,354.4L644.0,351.0L650.5,349.8L656.8,347.4L660.5,342.6L663.9,339.9L666.7,336.9L670.4,332.5L675.3,331.0L677.3,334.0L681.5,333.7L683.2,328.1L686.6,325.2L690.9,324.0L696.6,325.8L701.7,325.5L700.9,329.0L698.3,333.4L702.3,336.6L708.5,341.4L713.1,341.1L715.1,334.0L715.4,327.2L717.9,321.4L720.8,326.6L721.6,331.6L725.9,334.0L726.5,338.4L728.7,345.3L735.9,349.8L739.3,355.0L742.1,359.6L747.8,364.9L749.5,375.4L747.8,383.6L745.0,389.7L742.1,393.7L739.8,400.0L739.0,406.0L733.6,407.1L729.3,411.4L725.0,408.9L720.8,410.7L713.7,408.2L710.0,404.2L709.4,400.0L705.1,399.3L706.6,395.8L704.6,391.0L701.7,397.9L699.4,395.5L696.6,396.5L694.3,389.7L686.6,385.3L676.7,387.0L666.7,390.3L663.9,393.7L653.9,393.4L648.2,397.2L642.6,397.2L639.7,394.8L641.7,391.4L641.7,385.3L639.7,378.7L638.6,373.8L634.9,368.4L636.3,362.7ZM724.2,417.7L734.4,418.1L733.6,426.5L730.2,428.9L725.9,423.8ZM803.8,395.1L809.0,400.0L812.9,405.3L820.3,406.7L816.1,412.2L813.2,418.9L810.4,420.8L809.2,414.4L807.0,412.2L809.0,406.0L804.7,398.9ZM803.6,417.0L808.1,419.6L806.1,425.4L801.8,430.5L799.6,432.4L797.6,438.1L793.3,441.0L786.2,438.5L791.3,430.5L797.6,425.4L801.8,418.9Z" fill="none" stroke="#c3dbe1" stroke-width="2.6" stroke-linejoin="round"/><path d="M-28.7,12.1L-11.7,21.6L-0.3,23.9L5.4,22.3L16.8,23.9L25.3,26.1L33.8,25.4L39.5,21.6L42.4,12.1L45.2,-5.0L49.5,1.2L52.3,9.6L58.0,16.9L63.7,25.4L66.6,29.1L69.4,17.7L72.2,9.6L77.9,11.3L81.3,20.8L81.1,31.3L75.9,36.3L68.5,34.9L65.1,45.3L58.0,51.9L54.6,54.5L49.5,59.5L44.7,70.4L43.2,79.0L44.7,82.9L49.5,89.9L55.2,92.0L62.3,95.6L69.4,101.2L78.5,102.2L78.8,111.4L80.8,116.1L83.6,120.3L87.0,118.9L88.2,114.7L87.6,106.6L93.0,98.7L94.7,91.5L92.7,82.9L91.9,73.3L90.2,62.6L97.8,62.6L103.5,63.2L108.4,69.2L112.9,70.4L114.9,79.0L114.6,82.9L119.7,85.6L123.4,82.9L127.1,77.9L128.6,74.5L132.0,84.5L136.2,90.9L138.2,97.7L142.5,101.7L149.0,105.2L152.5,110.0L154.2,116.1L150.8,119.8L145.3,121.6L141.9,125.2L133.4,124.8L124.3,125.2L120.6,128.7L116.3,133.9L112.1,138.1L110.6,139.4L113.5,136.9L117.8,132.2L123.4,130.0L129.7,130.9L128.3,134.8L126.3,135.6L128.3,138.6L129.1,142.3L133.4,143.9L137.7,144.3L140.8,139.0L142.5,143.1L138.5,145.9L133.4,148.4L129.1,151.5L125.4,153.1L124.3,150.0L129.7,145.9L124.9,146.8L121.5,148.4L117.8,150.0L113.5,152.3L111.5,156.2L112.1,159.7L113.6,158.7L111.5,160.8L107.8,162.0L103.2,163.1L102.1,164.6L101.8,167.6L99.6,170.5L99.0,172.7L96.7,177.0L95.6,177.4L97.3,180.9L97.8,183.7L94.7,185.4L91.0,188.2L87.3,190.6L83.6,193.6L81.6,196.3L80.8,199.6L81.6,202.9L83.6,206.8L84.9,211.6L84.5,215.4L83.3,216.7L81.6,216.4L79.9,213.5L77.4,209.1L77.1,205.2L74.5,201.6L71.4,202.3L69.4,200.9L65.7,200.0L61.7,200.0L58.3,200.9L58.6,203.9L56.0,204.2L52.3,202.9L46.6,202.3L42.9,203.6L38.1,207.1L35.6,210.3L35.6,214.5L34.7,219.8L34.4,225.7L36.1,230.9L38.7,234.8L41.8,236.9L44.7,238.1L48.6,237.2L51.5,236.9L54.6,234.5L55.5,230.0L57.7,228.8L61.7,227.9L64.8,228.2L64.0,232.1L63.1,236.0L62.0,237.8L61.7,240.2L60.6,245.0L63.4,245.3L68.3,245.0L72.8,245.3L75.7,247.6L75.1,252.0L74.8,256.7L74.2,259.3L75.9,262.2L78.8,264.5L81.1,265.7L84.5,264.5L86.5,263.4L89.3,263.9L92.4,266.0L94.1,266.2L95.9,264.2L97.6,261.3L99.3,259.3L101.5,258.4L104.1,258.4L107.2,256.7L108.7,255.3L110.4,257.6L108.1,259.3L108.9,261.1L110.6,262.8L112.1,259.9L113.5,255.8L114.1,258.2L118.0,259.9L124.0,260.5L129.1,261.6L132.0,260.2L136.2,260.2L136.8,262.8L139.1,266.2L141.9,266.5L144.8,268.3L147.1,271.1L150.2,273.7L153.6,274.0L157.6,274.0L160.7,275.4L163.8,277.1L166.1,278.8L167.5,282.3L169.0,285.7L170.1,289.4L170.4,290.8L173.2,293.4L174.6,291.9L177.5,292.5L183.2,294.5L186.3,297.6L189.2,297.6L194.6,299.1L199.1,298.8L203.1,301.0L206.8,304.5L210.2,305.3L212.5,306.5L213.6,311.6L212.8,316.5L210.8,318.8L207.1,322.3L205.4,325.8L202.2,328.7L201.7,333.4L201.7,339.9L200.2,343.8L199.4,348.0L197.1,351.6L196.0,355.0L193.1,357.7L189.7,358.1L185.5,359.3L182.6,360.5L178.9,362.7L175.5,365.9L174.6,369.0L174.4,373.5L172.4,376.1L169.8,380.3L167.8,383.6L165.3,387.0L163.0,391.0L160.4,393.4L158.4,395.8L155.0,396.8L151.9,396.5L148.5,395.1L146.5,393.7L146.2,395.8L149.0,398.6L150.5,401.7L151.3,402.8L149.0,407.5L145.3,409.6L139.1,411.1L135.4,410.7L136.0,414.0L135.1,417.0L132.0,419.3L127.7,418.5L127.4,421.1L130.6,422.7L131.7,425.0L129.1,426.1L127.7,427.7L126.9,432.8L122.9,434.4L120.3,439.7L123.4,443.0L125.4,446.0L121.5,449.8L119.7,453.3L117.5,456.4L116.3,460.0L118.3,465.9L119.2,478.9L99.3,478.9L99.3,455.5L98.1,449.0L99.8,442.6L101.5,436.5L103.8,431.6L105.5,424.6L103.0,421.9L102.4,417.0L103.8,409.6L103.2,404.9L106.1,398.9L108.4,393.1L109.2,387.0L108.9,380.3L109.8,375.4L111.2,370.6L112.1,364.3L112.4,359.6L113.2,353.4L112.9,345.9L112.4,343.8L109.2,340.8L105.0,338.1L100.7,335.7L96.7,332.5L95.3,329.6L93.0,325.2L90.7,320.8L88.5,315.6L86.2,311.6L83.6,309.3L81.6,307.6L81.9,304.8L81.3,303.3L84.2,300.5L85.6,297.9L82.5,297.1L82.5,294.2L83.9,291.7L85.0,288.5L87.9,287.4L89.3,286.0L91.0,283.4L92.7,280.0L92.4,275.1L92.2,271.7L90.7,270.0L89.6,267.7L86.5,265.4L86.2,267.4L83.9,270.0L81.6,268.8L78.8,267.4L74.8,266.5L74.5,264.2L71.1,262.8L68.8,262.2L68.3,259.6L66.8,257.0L64.3,253.8L63.4,252.3L60.6,252.9L57.7,252.0L54.6,250.9L52.0,250.3L50.1,248.8L47.5,246.2L45.2,244.4L42.4,244.4L38.4,245.6L35.0,244.4L31.9,243.2L28.2,241.7L23.9,239.9L20.2,238.4L17.9,237.2L15.4,235.4L12.8,232.7L12.8,229.7L13.1,227.9L11.7,224.8L9.4,222.0L6.0,218.9L4.0,216.4L1.7,215.4L1.1,212.3L-1.7,209.1L-3.7,207.8L-7.4,202.9L-13.9,195.6L-43.0,184.4L-43.0,12.1ZM404.5,197.3L400.8,196.0L397.9,197.0L395.1,198.3L389.4,196.6L383.7,196.0L378.0,193.0L373.8,191.6L369.5,194.6L368.1,199.6L363.8,198.6L356.7,196.0L355.8,193.6L349.6,191.6L345.3,190.6L341.0,188.5L343.9,183.7L343.6,178.1L340.5,176.3L336.8,177.7L331.1,177.4L326.8,178.1L321.1,178.1L315.4,179.1L309.8,182.0L306.3,184.1L297.5,181.3L295.0,182.7L293.3,187.9L288.4,190.2L284.7,198.0L285.0,202.9L279.9,207.1L275.6,209.1L271.4,213.9L267.4,221.1L264.2,228.8L266.2,234.2L265.7,241.7L264.8,246.2L262.8,248.5L264.8,252.0L265.1,255.8L268.5,257.9L271.1,260.8L274.8,264.2L277.0,268.5L280.7,272.0L285.6,276.0L291.3,278.3L297.0,276.3L302.6,276.3L307.5,277.1L314.0,274.3L318.3,272.8L322.6,272.6L326.3,273.7L329.1,278.0L332.5,278.3L336.8,277.7L339.6,280.0L340.5,283.7L339.6,288.0L339.1,292.2L338.2,295.1L342.5,300.8L346.2,304.5L347.6,307.9L350.1,315.1L351.0,320.8L351.9,325.2L348.2,329.6L346.7,335.4L346.2,341.4L349.6,348.9L353.8,356.5L354.7,365.9L356.1,370.6L359.5,375.8L361.8,382.0L364.4,387.0L364.4,392.0L365.2,394.8L369.5,396.5L376.6,393.7L383.7,393.7L388.0,392.7L392.2,389.3L397.9,384.6L400.8,379.7L405.0,375.4L406.2,369.0L405.3,366.8L412.2,362.7L413.6,358.1L413.0,353.4L411.6,348.9L416.4,345.3L422.1,341.4L426.9,336.9L428.1,332.5L427.8,323.7L425.8,319.4L424.4,313.6L423.0,309.3L424.4,305.0L426.4,300.2L429.2,296.5L433.5,292.2L437.8,286.5L443.4,283.7L449.1,278.0L453.4,270.8L456.2,263.7L458.5,257.9L454.8,257.9L449.1,258.7L440.6,260.8L436.0,257.9L434.3,255.0L430.6,250.6L426.4,246.2L423.5,241.7L422.1,237.2L418.7,231.2L417.8,225.1L413.6,220.4L410.7,214.2L407.9,209.4L405.3,201.6ZM386.0,-1.4L378.0,2.9L368.1,7.1L361.0,13.7L355.3,21.6L351.0,27.6L349.0,36.3L347.3,45.3L342.5,49.9L338.2,55.1L332.5,60.8L327.4,64.4L326.8,70.4L327.4,77.3L328.5,82.3L331.1,86.7L335.4,86.7L339.6,82.3L342.8,80.7L343.9,82.3L344.5,85.6L346.4,89.4L348.2,95.6L349.3,100.2L353.0,100.7L354.7,96.6L358.1,96.6L359.8,89.9L359.8,84.5L364.7,80.7L366.4,75.0L361.8,70.4L362.1,61.4L368.1,55.1L372.3,50.6L373.8,43.3L376.6,39.8L382.3,39.8L385.1,45.3L382.3,49.9L376.6,55.1L373.2,59.5L373.8,68.6L373.2,73.3L376.6,76.2L380.9,76.2L388.0,73.9L393.7,73.3L398.5,76.7L392.8,79.0L386.6,79.0L379.4,80.7L379.4,84.5L382.0,91.5L380.9,91.5L375.2,89.4L372.6,93.6L372.6,99.2L371.2,103.2L368.1,105.6L365.5,104.2L359.5,105.2L353.3,108.1L348.2,105.6L343.9,107.6L342.5,104.7L340.5,103.2L341.9,96.6L342.8,88.8L339.6,92.0L335.9,93.6L335.6,99.7L337.1,103.2L337.6,108.1L332.5,110.0L326.8,110.9L325.4,114.7L322.8,119.8L319.7,121.2L317.2,122.1L316.9,125.2L313.2,127.4L309.5,128.7L308.9,127.4L307.2,127.4L308.0,131.8L304.1,131.3L298.9,132.6L300.4,135.6L305.5,137.7L306.9,139.8L309.2,143.9L309.2,149.2L308.3,153.1L302.6,153.1L297.0,152.7L291.3,151.9L286.1,154.7L287.3,158.9L287.6,164.6L285.6,170.9L287.6,173.1L287.3,177.4L291.6,176.7L294.7,178.1L296.7,180.9L299.8,178.4L306.6,178.1L310.6,175.2L313.2,170.9L311.7,168.3L315.2,162.7L321.7,159.3L321.4,155.1L325.4,153.5L331.1,154.7L333.9,151.9L337.6,149.6L341.6,151.5L342.5,155.5L346.7,159.3L351.0,162.0L355.3,165.7L357.3,166.8L358.1,172.0L357.0,173.8L359.5,172.0L361.2,168.7L359.8,166.5L364.9,167.2L365.2,165.7L358.1,160.8L352.4,157.0L351.3,153.1L347.6,149.2L347.9,145.5L351.6,144.7L353.0,146.8L355.8,150.4L359.5,153.1L365.2,157.4L367.8,159.7L367.8,165.3L370.3,168.3L372.6,172.7L374.0,177.4L376.6,179.5L378.6,177.0L378.3,173.8L380.9,173.1L377.5,170.2L376.9,165.7L380.3,164.6L386.6,163.5L387.1,165.3L387.4,166.5L388.8,169.4L388.0,172.3L390.3,176.7L392.2,178.1L396.5,180.2L399.4,179.1L403.6,180.2L409.3,179.9L413.6,178.8L415.3,178.1L414.4,182.7L414.7,186.1L413.6,189.6L412.4,191.9L410.7,196.3L407.9,197.6L404.5,197.3L405.3,201.6L407.9,207.1L410.2,208.4L411.9,202.9L412.2,207.8L416.4,214.2L419.3,219.5L423.0,226.6L424.1,229.1L427.8,234.2L430.6,240.2L433.8,245.9L435.8,254.4L439.2,254.4L443.4,252.3L450.6,250.6L456.2,247.6L461.1,245.0L464.8,242.9L469.6,240.5L473.6,237.8L476.7,236.0L479.3,231.5L482.7,225.1L479.9,222.0L476.2,220.8L473.0,217.6L472.5,213.5L470.5,215.7L467.6,219.8L461.9,219.8L459.4,219.5L458.5,213.9L457.1,217.9L455.4,214.2L453.4,210.7L450.6,206.2L449.1,201.6L453.4,201.3L456.2,204.5L459.1,208.1L464.8,211.6L470.5,211.6L473.3,210.7L476.2,215.1L481.8,216.1L487.5,216.7L494.6,216.4L501.8,216.1L504.6,217.9L506.9,221.1L508.3,225.7L509.2,225.4L513.1,230.0L517.4,228.8L519.1,228.2L519.7,235.7L520.8,241.7L522.5,246.2L524.8,253.5L526.8,257.9L529.3,262.8L533.0,267.7L535.0,265.4L537.9,261.3L539.6,257.9L541.0,252.6L540.7,247.0L544.4,243.5L546.7,241.7L551.5,237.8L556.7,233.3L559.8,230.3L560.6,228.2L564.3,226.6L569.5,226.9L573.7,225.4L574.9,229.1L576.0,231.8L578.8,234.2L581.1,238.7L580.8,244.1L584.0,245.3L587.1,242.3L590.2,243.2L590.8,249.1L592.5,255.0L593.1,261.3L592.2,266.5L595.6,272.3L597.9,276.6L599.3,281.7L601.3,283.7L607.0,287.1L609.0,286.5L606.7,280.3L606.1,275.1L602.7,272.8L599.9,271.4L597.9,266.8L595.1,263.9L594.8,259.9L596.8,255.0L598.8,252.0L599.9,254.4L603.9,256.1L605.6,259.3L609.8,261.1L611.3,266.0L615.5,263.7L618.4,261.1L623.2,257.6L623.5,252.0L622.1,246.8L618.1,242.3L615.5,238.7L613.3,235.7L616.1,231.2L618.4,228.2L621.2,227.9L624.6,228.5L626.1,231.8L626.9,229.1L630.6,227.9L635.4,226.0L638.3,225.1L644.0,223.9L646.8,221.7L650.2,218.6L652.8,215.7L653.9,211.6L656.8,207.8L659.3,202.9L658.2,198.6L659.1,195.6L656.2,191.9L653.4,186.8L654.8,181.6L660.8,177.4L657.3,175.2L651.9,176.7L649.7,173.8L647.1,170.2L650.8,169.1L656.2,164.6L659.1,163.5L657.3,168.3L658.5,170.5L661.0,167.9L665.9,166.8L668.7,168.7L667.6,173.8L671.3,174.9L672.4,179.1L671.9,184.4L675.3,185.8L679.5,184.1L681.0,180.9L680.7,175.6L678.1,172.0L675.3,167.2L681.0,162.7L683.8,157.0L688.1,154.3L692.3,155.8L698.0,151.5L703.7,145.1L709.4,136.9L712.2,128.3L712.5,119.3L714.5,113.3L710.3,106.6L702.9,107.6L698.0,104.7L702.3,98.7L710.8,89.9L717.9,80.7L726.5,79.6L735.0,80.1L743.5,81.2L751.8,81.2L757.8,76.2L761.7,72.7L768.8,71.9L779.7,68.6L783.6,69.2L776.2,73.9L769.1,79.0L764.9,86.1L759.2,91.5L756.3,102.7L755.2,110.0L758.3,121.6L762.9,114.7L767.7,106.6L773.4,97.7L777.1,88.8L774.8,81.8L780.5,76.2L786.2,74.5L797.0,76.2L807.5,65.6L824.6,45.3L824.6,23.9L810.4,20.0L797.0,17.7L788.8,12.1L777.7,13.7L773.1,21.6L771.1,12.1L768.3,2.0L753.5,-9.5L739.3,-9.5L682.4,-9.5L625.5,-29.0L540.2,-19.0L525.9,-14.2L525.9,-5.0L526.8,6.3L528.8,14.5L535.9,20.0L538.7,29.8L533.0,29.8L527.4,21.6L524.5,23.9L518.8,36.3L512.6,37.0L511.1,34.2L518.3,27.6L521.7,12.1L520.2,3.8L521.1,-5.0L518.8,-19.0L513.1,-17.0L508.0,0.3L511.0,12.9L509.4,22.3L505.9,13.7L496.1,12.1L486.7,11.3L482.4,20.4L474.7,19.2L464.2,18.1L456.2,24.6L449.7,27.6L444.9,32.0L443.2,26.9L439.5,20.8L435.8,19.2L437.8,26.9L438.6,34.9L432.1,35.6L428.7,43.9L426.4,48.0L420.7,49.3L417.8,52.5L412.4,49.3L411.6,41.9L406.5,34.2L405.0,30.6L412.2,36.3L422.1,38.4L429.8,32.7L425.0,23.1L415.0,15.3L407.9,14.5L400.8,9.6L393.7,0.3ZM-23.0,16.1L-6.0,18.5L11.1,17.7L19.6,16.9L24.7,12.9L21.0,5.5L13.9,-5.0L-0.3,-9.5L-23.0,-19.0ZM28.7,19.2L39.5,20.8L41.0,13.7L35.3,8.8L29.6,12.1ZM91.3,43.9L95.0,49.9L100.7,48.6L103.5,51.9L109.2,58.3L114.9,59.5L118.6,62.6L124.3,65.0L127.7,61.4L123.4,56.4L128.3,53.2L126.3,45.3L132.0,43.9L136.2,36.3L138.2,34.2L133.4,31.3L130.6,27.6L124.9,23.9L120.6,16.1L117.8,8.0L113.5,2.0L107.8,-5.0L90.7,-19.0L56.6,-19.0L70.8,5.5L80.8,8.0L89.3,9.6L96.4,20.0L102.1,25.4L105.0,31.3L103.5,38.4L97.8,41.9L93.6,41.9ZM66.6,51.9L70.8,43.3L75.7,38.4L81.6,49.9L76.5,59.5L69.4,57.0ZM105.0,-76.3L119.2,-51.0L124.9,-45.2L147.6,-45.2L153.3,-19.0L156.2,-5.0L159.0,10.4L166.1,14.5L160.4,20.0L161.3,31.3L159.9,38.4L163.6,45.3L165.8,50.6L169.0,58.3L170.9,64.4L173.8,69.2L176.1,71.6L184.6,75.6L188.9,77.3L190.3,75.0L192.3,70.4L194.6,61.4L198.0,51.9L204.5,41.9L205.9,41.2L213.0,38.4L220.2,22.3L235.8,20.0L242.9,12.1L250.0,6.3L248.6,3.8L251.4,-5.0L255.7,-76.3ZM242.9,41.9L244.9,37.0L248.9,35.6L252.9,41.9L257.1,37.7L261.4,37.0L265.7,34.9L271.4,36.3L270.8,41.2L274.2,43.9L271.4,49.3L267.1,51.2L259.4,55.7L254.3,53.8L248.0,53.2L250.6,49.9L244.3,46.6L248.6,44.6ZM143.6,136.5L153.9,139.4L160.4,140.6L163.0,136.9L160.4,133.5L161.8,129.2L154.7,127.0L154.2,118.9L149.0,123.4L144.8,132.2ZM71.1,226.9L75.1,223.9L79.4,222.9L83.6,223.2L89.3,225.4L93.0,228.2L97.3,230.6L101.8,232.1L97.8,233.0L91.6,233.0L92.2,230.6L87.9,227.9L82.2,226.3L77.1,224.8L72.8,226.9ZM101.0,237.5L105.5,233.0L110.6,233.0L113.8,233.9L118.3,236.9L113.5,238.1L109.5,239.9L105.5,238.4L101.0,237.8ZM89.9,237.8L95.6,238.1L93.9,239.0L91.3,239.0ZM121.5,237.5L126.0,237.8L124.9,238.7L121.5,238.7ZM296.4,126.1L300.7,124.3L304.1,123.0L308.3,123.4L315.4,122.1L316.6,120.3L315.2,118.0L317.4,114.7L313.5,112.4L312.9,109.5L310.9,105.2L308.0,100.2L305.5,97.7L304.4,95.1L307.5,89.9L302.6,88.8L303.8,84.0L298.4,84.0L295.0,89.9L296.7,95.1L295.5,101.2L298.7,103.7L303.5,104.7L304.1,108.6L299.5,110.9L300.1,113.3L300.7,115.7L297.5,118.0L301.2,118.9L303.8,119.8L299.8,121.2ZM295.5,116.1L295.0,110.5L295.5,106.6L296.1,103.2L291.8,100.7L288.4,103.2L284.2,106.6L284.4,110.5L285.6,114.3L283.0,117.5L284.7,119.3L289.8,118.4L294.1,116.6ZM347.9,173.4L357.0,172.7L355.6,178.4L348.2,175.2ZM335.9,162.3L340.5,162.7L339.9,169.8L336.5,170.5ZM337.1,155.5L339.3,155.1L339.6,161.2L337.6,160.5ZM379.4,182.7L387.4,183.7L382.3,184.8ZM404.5,184.4L411.0,182.3L409.3,185.8ZM449.1,13.7L453.4,12.9L452.5,17.7L449.7,17.7ZM343.9,99.2L348.4,97.7L347.9,101.7L344.7,101.7ZM452.8,325.2L456.2,334.8L454.3,339.9L452.5,344.4L449.1,355.0L446.9,363.7L441.2,365.9L437.8,362.7L436.3,355.0L438.6,348.9L437.8,341.4L443.4,336.3L448.6,332.5L450.6,329.0ZM539.9,262.8L543.0,266.5L545.6,270.0L544.4,273.1L541.0,273.7L539.6,269.4ZM656.8,216.4L659.6,217.3L658.2,223.5L656.2,226.9L654.2,223.5ZM621.5,235.1L626.9,232.4L628.3,233.9L624.1,238.1ZM684.9,187.9L686.6,185.8L690.9,182.7L698.0,182.3L701.7,176.7L706.6,174.5L710.5,168.3L710.8,164.2L713.1,160.8L715.1,161.6L716.2,168.3L713.7,172.7L713.4,177.7L713.1,182.0L710.3,184.4L707.4,185.4L702.3,185.8L699.4,189.6L696.9,186.8L692.3,186.5L687.5,188.2ZM710.8,160.8L712.2,155.1L715.1,153.1L715.9,145.5L720.8,150.4L725.9,150.0L726.5,153.9L720.8,158.9L714.2,159.7ZM681.5,189.6L685.8,188.2L688.1,191.9L686.1,197.0L682.9,197.3L681.8,192.3ZM688.6,190.6L692.3,187.9L695.7,187.2L694.6,190.2L690.9,191.9ZM716.5,143.1L720.8,141.0L719.4,130.5L723.1,130.5L719.9,119.3L719.4,110.0L718.2,106.1L717.1,110.0L715.9,121.6L716.5,134.8ZM655.6,237.2L660.2,237.2L661.0,241.7L658.5,245.3L659.6,250.6L665.3,253.5L663.9,254.4L659.6,251.7L655.6,249.7L653.9,244.7ZM659.6,270.8L663.9,266.2L669.6,263.1L672.4,269.4L671.0,272.8L665.3,273.1L659.6,271.4ZM659.6,257.0L665.3,255.5L669.6,259.3L668.2,262.2L663.3,264.2L661.0,262.8L659.3,260.8ZM646.0,267.1L652.5,258.4L653.4,260.5L646.8,268.0ZM622.6,286.5L624.4,284.8L628.3,286.5L634.0,281.7L641.1,275.7L645.4,270.8L651.7,275.7L648.2,278.0L647.4,282.3L650.8,288.0L646.8,289.4L644.8,295.1L644.0,300.8L638.3,301.3L629.8,299.3L626.1,298.8L625.5,294.5L622.6,291.4ZM583.7,274.8L589.9,276.0L597.0,283.7L601.3,285.7L607.9,292.2L611.3,296.5L614.1,299.9L613.5,307.3L609.8,307.6L603.6,302.2L599.3,296.5L595.6,290.8L593.1,285.7L588.5,280.8L585.1,278.0ZM611.8,310.2L614.1,307.9L620.7,308.8L626.9,310.5L632.6,310.5L638.3,312.8L638.3,315.6L628.3,314.5L619.8,313.1L615.5,311.9ZM639.7,314.2L642.6,314.5L651.1,314.2L655.4,314.5L662.5,314.5L661.9,315.6L652.5,316.2L644.0,316.5L639.7,315.9ZM665.3,319.1L668.7,315.4L674.7,314.8L671.0,317.4L666.2,320.0ZM652.5,306.5L655.4,306.5L655.1,299.3L658.2,303.6L659.6,304.5L661.9,303.6L658.2,299.3L657.6,295.1L662.5,293.6L663.3,293.1L658.2,293.4L655.4,289.4L662.5,289.4L668.2,286.5L666.7,289.4L654.5,289.9L653.4,291.4L650.5,298.8L652.2,301.6ZM675.3,285.7L677.3,288.0L678.1,293.1L676.1,292.2L674.7,289.4ZM676.7,299.3L683.8,299.3L684.7,301.6L678.1,300.8ZM685.2,294.5L689.5,291.9L693.8,293.4L696.6,300.2L703.7,295.1L713.7,298.2L723.6,301.6L727.3,305.0L732.2,307.9L733.0,312.2L737.8,317.9L741.5,320.3L736.4,320.3L731.3,317.9L727.9,314.2L722.2,312.8L719.4,316.5L713.7,316.8L708.0,313.9L704.6,314.8L706.6,309.3L703.7,305.0L697.2,303.6L692.3,302.2L688.1,298.8L691.5,297.3L686.6,295.4ZM735.0,306.5L739.3,305.0L745.0,302.8L743.5,306.5L737.8,308.5ZM757.8,310.2L760.6,312.2L766.3,314.2L770.0,317.9L771.4,320.0L767.7,318.8L762.0,315.1ZM779.7,349.5L783.4,351.9L787.6,355.9L786.2,356.5L781.4,352.8ZM635.4,356.5L637.4,354.4L644.0,351.0L650.5,349.8L656.8,347.4L660.5,342.6L663.9,339.9L666.7,336.9L670.4,332.5L675.3,331.0L677.3,334.0L681.5,333.7L683.2,328.1L686.6,325.2L690.9,324.0L696.6,325.8L701.7,325.5L700.9,329.0L698.3,333.4L702.3,336.6L708.5,341.4L713.1,341.1L715.1,334.0L715.4,327.2L717.9,321.4L720.8,326.6L721.6,331.6L725.9,334.0L726.5,338.4L728.7,345.3L735.9,349.8L739.3,355.0L742.1,359.6L747.8,364.9L749.5,375.4L747.8,383.6L745.0,389.7L742.1,393.7L739.8,400.0L739.0,406.0L733.6,407.1L729.3,411.4L725.0,408.9L720.8,410.7L713.7,408.2L710.0,404.2L709.4,400.0L705.1,399.3L706.6,395.8L704.6,391.0L701.7,397.9L699.4,395.5L696.6,396.5L694.3,389.7L686.6,385.3L676.7,387.0L666.7,390.3L663.9,393.7L653.9,393.4L648.2,397.2L642.6,397.2L639.7,394.8L641.7,391.4L641.7,385.3L639.7,378.7L638.6,373.8L634.9,368.4L636.3,362.7ZM724.2,417.7L734.4,418.1L733.6,426.5L730.2,428.9L725.9,423.8ZM803.8,395.1L809.0,400.0L812.9,405.3L820.3,406.7L816.1,412.2L813.2,418.9L810.4,420.8L809.2,414.4L807.0,412.2L809.0,406.0L804.7,398.9ZM803.6,417.0L808.1,419.6L806.1,425.4L801.8,430.5L799.6,432.4L797.6,438.1L793.3,441.0L786.2,438.5L791.3,430.5L797.6,425.4L801.8,418.9Z" fill="#faf8f4"/><path d="M-37.3,130.5L42.4,130.5L42.4,128.7L56.6,134.3L61.4,133.5L72.0,141.0L78.2,145.9L77.9,155.1L76.2,158.9L87.9,155.8L87.3,153.5L95.6,151.1L100.1,147.2L109.2,147.2L112.1,143.1L115.8,137.3L119.2,137.7L119.7,143.5L122.0,147.2M-20.5,193.0L-13.7,192.3L-3.1,197.0L4.8,197.0L9.7,195.3L15.4,202.6L19.6,204.5L24.2,201.9L29.6,209.4L36.1,214.5M50.3,249.1L50.3,246.8L52.6,244.4L55.5,244.4L55.5,239.3L59.2,239.3L61.4,237.2M58.9,239.3L58.9,245.0L61.7,245.6M58.6,249.4L58.9,245.0M56.3,251.5L58.6,249.4L62.9,252.3M62.9,252.3L68.5,251.2L70.8,247.9L75.9,247.6M68.8,259.0L74.5,259.6M76.8,267.7L77.6,263.4M93.0,268.3L91.0,270.3M107.2,257.0L106.4,266.5L107.8,270.8L113.5,271.1L120.6,273.1L119.7,278.0L122.0,286.5M87.9,287.1L92.4,289.7L98.4,291.1L103.5,294.2L113.5,302.8L114.9,293.6L113.5,286.5L122.0,286.5L130.6,279.4L139.7,278.0L143.4,286.5L151.9,285.4L157.6,284.3L164.7,284.5L165.8,278.8M139.7,278.0L141.9,266.5M150.2,273.7L149.0,280.8L151.9,285.4M159.0,274.3L157.6,284.3M84.2,300.5L86.5,303.6L90.7,299.3L98.4,291.1M113.5,302.8L105.2,305.3L102.7,312.2L106.4,317.9L111.8,317.9L112.1,322.3L114.6,322.3L116.9,326.6L115.5,335.4L114.9,341.4L112.4,343.8M114.6,322.3L126.9,318.8L129.1,326.6L140.5,330.4L141.1,335.4L147.1,337.8L147.6,348.3M114.9,341.4L118.0,347.4L118.6,353.4L119.7,357.4L127.1,355.3L134.0,355.0L137.7,348.9L147.1,348.3M119.7,357.4L117.8,362.7L117.8,370.6L114.9,380.3L113.5,388.6L112.1,397.2L110.6,407.8L108.7,418.9L108.4,430.5L106.4,442.6L105.0,453.3L106.9,462.3M134.0,355.0L141.9,361.2L146.2,371.3L153.9,371.9L157.3,366.2L154.7,359.6L148.2,355.3L147.1,348.3M157.3,366.2L159.6,370.9L154.2,374.5L148.8,381.0L153.3,383.6L160.7,392.7M148.8,381.0L147.1,390.3L146.5,393.7M287.3,159.3L294.1,160.1L293.0,166.5L291.8,173.1L291.6,176.7M307.5,153.5L314.0,156.2L321.7,157.4M319.7,121.2L324.5,126.1L329.1,128.3L335.9,130.5L334.2,136.5L330.0,142.3L332.5,143.9L332.8,150.4L333.9,151.9M322.3,119.8L329.4,121.6L329.7,122.5L330.2,125.6L329.1,128.3M332.8,110.5L331.7,117.0L329.7,122.5M337.1,103.2L340.8,103.7M353.0,108.1L354.1,114.3L355.3,121.6L347.0,124.8L351.9,131.3L349.6,136.9L339.9,136.9L334.2,136.5M332.5,143.9L336.8,141.9L341.3,142.3L342.5,139.4L339.9,136.9M342.5,139.4L347.3,138.6L351.6,141.0L351.6,144.7M351.9,131.3L355.3,130.5L361.0,132.2L360.7,136.0L358.4,139.8L351.6,141.0M355.3,121.6L359.5,124.8L366.1,128.3L376.6,130.0L380.9,123.9L379.4,117.0L379.4,108.1L377.5,105.6L368.4,105.6M361.0,132.2L366.1,128.3M361.0,134.8L366.6,134.3L376.0,133.1M376.0,133.1L372.3,141.9L366.6,143.1L359.5,141.0M376.0,133.1L382.3,135.2L388.3,133.9L392.8,145.1L397.1,145.9M388.3,133.9L392.2,136.9L395.7,139.0L392.8,145.1M372.3,141.9L377.2,150.0L383.7,152.3L389.4,150.8L394.0,151.9M377.2,150.0L376.3,157.8L382.3,160.5L386.8,160.1L392.2,158.9M386.8,160.1L386.6,163.5M366.6,143.1L367.5,147.6L368.1,155.1L369.5,157.0L372.3,158.2L376.3,157.8M359.5,146.4L366.1,147.6L367.5,147.6M357.3,151.1L362.4,155.1L365.2,157.4M368.1,157.0L371.2,159.3L372.3,164.6L370.3,167.9M371.2,159.3L376.3,162.0L382.3,160.5M372.6,97.2L388.3,99.2M381.7,87.8L390.5,89.9M392.2,79.6L391.4,88.3L390.5,89.9L392.8,97.2L388.3,99.2M392.8,97.2L400.5,99.7L403.1,112.4L399.4,119.8L379.7,119.3M403.1,116.6L409.3,115.7L413.6,124.3L421.3,126.5L426.4,127.8L425.5,135.6L421.3,138.6M392.2,73.3L402.2,58.9L397.9,51.9L397.9,27.6L394.2,16.9L400.8,10.4M381.4,39.8L379.7,29.8L370.9,16.1L383.7,18.5L394.2,16.9M344.7,81.8L348.2,70.4L347.3,58.3L353.8,41.9L358.1,24.6L363.8,20.0L370.9,16.1M430.6,160.8L436.3,162.3L440.0,167.6L438.6,177.0L432.9,177.0L420.7,178.1L416.7,180.2M426.1,153.5L432.1,154.3L439.2,156.2L444.9,159.7L450.6,159.7M436.3,162.3L444.9,162.7L440.6,166.5L444.9,170.5L449.1,172.0M438.6,177.0L442.0,182.7L443.4,189.6L448.6,196.3L450.6,201.3M432.9,177.0L429.2,186.5L423.0,189.9L417.8,196.3L424.1,194.0L439.7,203.9L444.9,204.2L449.1,201.6M444.9,204.2L450.3,206.2M414.7,186.1L416.7,180.2M413.6,189.6L414.4,192.3L413.6,196.3L411.9,202.9M434.3,242.6L439.2,240.5L446.3,242.0L460.5,235.7L469.0,232.7L470.5,224.5L469.6,220.4M461.1,245.0L460.5,235.7M457.7,218.6L461.9,223.9L470.5,224.5M447.7,143.1L452.0,141.0L446.3,130.5L445.7,123.9L454.8,119.3L469.0,123.4L479.0,122.5L487.5,117.0L486.1,107.6L498.9,104.2L508.9,100.7L521.7,107.6L530.2,106.6L533.9,110.9L541.6,120.3L550.1,121.6L555.8,128.3L560.9,130.0M560.9,130.0L555.8,139.0L548.7,138.1L547.3,145.1L540.2,147.2L540.7,158.9M463.4,158.9L471.9,161.6L471.9,147.2L479.0,145.1L486.1,149.6L489.0,153.1L497.2,152.3L500.6,158.9L507.4,164.2L514.6,157.8L521.7,157.0L540.7,158.9M471.9,161.6L483.3,159.3L489.0,166.5L496.1,172.7L501.8,175.9M466.2,176.3L474.7,173.8L484.7,178.8L486.7,182.3L490.4,183.7L496.1,179.9L501.8,175.9L506.0,177.4L516.0,174.1L525.6,176.7M507.4,164.2L513.1,167.2L522.5,168.3L527.4,164.6L540.7,158.9M525.6,176.7L522.5,168.3M486.7,182.3L484.7,189.6L485.5,198.0L488.4,198.0L493.2,203.2L487.5,203.9L488.4,209.4L492.4,210.3L487.8,216.7M487.5,203.9L496.1,202.9L501.8,201.6L508.9,196.3L513.1,188.9L516.0,180.9L525.6,176.7M506.9,221.1L513.1,218.9L514.6,209.4L521.7,201.3L524.5,196.3L524.5,191.3L531.6,184.4M531.6,184.4L540.2,182.7L538.7,193.0L543.0,200.6L551.5,206.2L563.5,208.1M540.2,205.2L551.5,209.4L563.5,211.9M564.3,226.6L565.8,214.2L574.3,217.3L575.7,225.1M565.2,210.3L573.4,208.4L582.8,203.9L589.4,207.1L581.4,215.7L578.0,223.5L575.7,228.2M589.4,207.1L592.8,215.7L595.6,226.3L601.3,228.2L604.2,225.1L611.3,223.5L617.0,225.1L619.8,228.2M595.6,226.3L598.5,231.8L592.8,243.2L593.1,261.3M598.5,231.8L602.7,238.7L609.8,240.2L612.7,250.0M604.2,255.0L612.7,250.0M604.2,225.1L608.4,232.7L611.3,237.2L618.4,246.2L618.4,249.1L614.1,257.9L609.8,261.1M597.9,272.6L602.7,273.1M562.3,130.0L571.4,145.1L584.2,150.4L599.9,157.0L612.7,160.1L629.8,153.1L639.7,145.9L651.1,140.2L646.8,128.3L641.1,134.8L631.2,128.3L621.2,126.1L614.1,124.8L602.7,119.3L591.4,117.0L582.8,126.1L572.9,123.9L562.3,130.0M651.1,140.2L655.4,130.5L653.9,114.7L668.2,111.4L675.3,127.0L685.2,136.0L695.2,133.5L690.9,147.2L685.2,155.5L683.8,157.0M665.9,166.8L671.0,160.8L676.7,158.9L683.8,157.0M671.3,174.9L678.1,172.0M624.4,284.8L628.3,287.1L636.9,286.5L641.1,280.8L646.8,278.8M713.7,298.2L713.7,316.8M306.3,184.1L307.5,193.0L302.4,198.6L287.9,205.5L287.9,210.0L298.9,217.3L316.0,229.7L324.0,235.1L329.7,234.2L345.3,219.5L340.5,212.6L341.6,202.9L339.6,199.6L335.9,191.3L336.8,177.7M287.9,208.7L275.1,208.7M287.9,214.2L278.5,214.2L278.5,222.0L275.6,228.8L264.2,228.8M298.9,217.3L295.5,218.3L297.0,243.2L279.9,246.2L277.9,248.5L265.7,244.4M345.3,190.6L341.6,196.3L339.6,199.6M383.7,196.0L383.7,226.6L380.9,232.7L380.9,234.2L356.7,222.0L345.3,219.5M383.7,226.6L417.3,226.6M356.7,222.0L357.3,232.7L351.0,250.6L351.0,253.5L346.7,252.9L338.2,254.1L324.0,252.0L322.6,257.9L320.3,272.8M324.0,235.1L322.6,246.2L315.4,247.6L305.5,247.6L297.0,259.3L289.8,266.5L288.4,278.0M380.9,234.2L376.6,250.6L375.2,256.4L379.4,265.1L389.4,263.7L397.9,262.2L406.5,256.4L409.3,263.7L412.2,276.6L420.7,280.6L430.6,279.4L433.5,276.6L439.2,277.1L448.8,268.0L436.3,263.7L434.3,259.3M356.7,269.4L365.2,265.1L373.8,260.8L379.4,265.1M351.0,253.5L355.3,260.8L356.7,269.4L353.8,278.0L358.1,285.1L349.6,284.5L344.7,284.5L340.5,284.3M422.1,238.7L416.4,249.7L409.3,263.7M416.4,249.7L426.4,249.1L433.5,255.0M429.2,295.6L429.2,279.7M424.1,304.2L409.0,293.6L397.9,294.5L397.1,288.0L400.8,280.3L409.3,278.8L412.2,276.6M336.8,277.7L340.5,270.8L346.7,266.5L351.0,260.8L353.8,255.0M304.1,276.6L304.6,259.3L312.6,259.3L314.0,273.7M279.9,270.8L284.2,266.5L287.0,256.4L279.9,255.0L273.6,255.0L265.1,255.3M280.2,255.3L277.9,248.5M312.6,259.3L315.4,258.7L319.7,255.8L322.6,257.9M358.1,285.1L365.2,279.4L376.6,278.0L385.1,276.6L390.8,276.6L397.9,279.4L400.8,280.3M379.4,265.1L390.8,276.6M365.2,279.4L362.4,293.6L355.3,302.2L346.7,305.0M344.7,284.5L353.8,293.6L345.3,300.8M347.6,307.9L359.5,312.2L363.8,313.6L373.8,310.8L380.9,322.3L386.6,324.6L395.1,326.6L393.7,315.1L399.4,314.2M395.1,315.1L396.5,303.6L395.1,297.9L397.9,294.5M399.4,314.2L406.5,317.9L410.7,323.7L427.5,320.8M406.5,317.9L407.9,331.0L412.2,339.9L413.6,332.5L410.7,323.7M346.2,340.8L372.3,342.9L379.4,342.3M380.9,322.3L375.2,328.1L375.2,338.4L379.4,342.3M372.3,342.9L372.3,355.0L369.5,355.0L369.5,363.7L369.5,375.4L359.5,375.8M369.5,363.7L385.1,365.9L389.4,360.5L396.5,355.6M384.3,342.3L388.0,348.9L396.5,355.6M379.4,342.3L384.3,342.3L392.2,338.4L399.4,335.4L406.5,339.9L405.0,351.9L401.6,356.2L403.6,364.3L406.2,370.0M389.4,375.8L395.9,377.1L392.8,382.3L389.7,379.7L389.4,375.8M399.4,335.4L406.5,332.5" fill="none" stroke="#e6c8cb" stroke-width="0.85" stroke-linejoin="round"/><path d="M50.6,139.8L58.0,139.8L61.7,139.0L63.4,141.0L71.1,140.2L72.0,136.9L70.8,134.8L67.1,131.8L61.4,131.3L57.7,134.8L54.0,137.7ZM63.7,160.1L67.1,157.8L67.4,154.3L66.6,149.2L69.1,146.8L70.8,143.9L66.6,143.9L62.9,149.2L62.6,155.1ZM71.7,143.5L75.1,143.1L79.4,142.7L84.2,144.3L85.6,148.0L82.5,148.8L80.2,146.4L80.2,151.1L77.9,155.1L76.8,151.5L74.0,152.3L75.7,149.6L73.7,145.5ZM75.1,160.1L82.2,159.3L87.9,155.8L83.6,156.6L77.9,158.9ZM85.6,153.9L95.0,153.5L95.9,150.8L92.2,151.1L87.0,152.3ZM37.0,124.3L38.7,119.3L34.4,107.6L31.9,108.6L31.0,116.1L35.8,123.0ZM395.1,162.0L400.8,162.3L407.9,158.9L412.7,158.9L419.3,162.3L425.0,162.7L430.6,160.8L431.2,156.2L426.4,153.1L420.7,149.6L419.3,146.4L416.4,145.9L413.6,146.8L407.9,149.2L405.0,145.5L408.2,143.1L402.2,140.6L399.4,141.9L397.1,145.9L394.2,150.0L392.2,155.1L392.0,158.9ZM412.2,145.5L413.6,145.1L419.3,139.8L424.4,138.1L421.3,143.1L417.0,145.5ZM452.0,141.0L459.1,139.0L463.4,141.0L463.9,146.4L459.1,149.2L461.9,155.8L463.4,160.8L464.8,166.5L463.4,170.2L466.2,176.3L457.7,178.8L452.0,175.2L452.0,170.2L453.4,165.3L450.6,159.7L447.7,155.1L446.9,150.4L447.7,145.1ZM481.3,142.3L485.0,141.5L487.0,143.5L484.4,144.7L482.1,144.3ZM479.3,145.5L480.7,145.9L480.4,150.0L479.0,149.2ZM403.6,289.9L408.7,290.2L410.7,293.4L407.9,297.9L403.6,297.3L402.5,293.6ZM395.7,300.2L396.8,303.6L399.6,311.6L401.1,315.4L399.9,315.6L397.1,310.8L395.1,303.9ZM409.3,317.9L411.3,322.3L413.0,331.6L411.3,331.0L409.9,324.0L409.0,318.8ZM607.9,118.9L610.7,119.3L615.5,114.7L621.2,110.0L624.9,100.2L623.2,98.7L619.8,106.1L614.1,111.4L609.8,116.1ZM522.0,142.3L523.7,141.0L527.4,140.6L533.0,141.0L537.9,140.6L537.3,142.3L531.6,142.3L526.5,143.1L523.7,144.7Z" fill="#d4e6ea" stroke="#c9dde2" stroke-width="0.8"/><text x="39.4" y="134.4" text-anchor="middle" style="font:700 13.6px 'Liberation Sans';letter-spacing:0.8px" fill="#3f5b79" stroke="rgba(255,255,255,0.6)" stroke-width="1.5" paint-order="stroke" stroke-linejoin="round">NORTH</text><text x="39.2" y="151.2" text-anchor="middle" style="font:700 13.6px 'Liberation Sans';letter-spacing:0.8px" fill="#3f5b79" stroke="rgba(255,255,255,0.6)" stroke-width="1.5" paint-order="stroke" stroke-linejoin="round">AMERICA</text><text x="139.3" y="327.9" text-anchor="middle" style="font:700 13.6px 'Liberation Sans';letter-spacing:0.8px" fill="#3f5b79" stroke="rgba(255,255,255,0.6)" stroke-width="1.5" paint-order="stroke" stroke-linejoin="round">SOUTH</text><text x="139.6" y="344.7" text-anchor="middle" style="font:700 13.6px 'Liberation Sans';letter-spacing:0.8px" fill="#3f5b79" stroke="rgba(255,255,255,0.6)" stroke-width="1.5" paint-order="stroke" stroke-linejoin="round">AMERICA</text><text x="514.2" y="167.7" text-anchor="middle" style="font:700 13.6px 'Liberation Sans';letter-spacing:0.8px" fill="#3f5b79" stroke="rgba(255,255,255,0.6)" stroke-width="1.5" paint-order="stroke" stroke-linejoin="round">ASIA</text><text x="392.3" y="270.9" text-anchor="middle" style="font:700 13.6px 'Liberation Sans';letter-spacing:0.8px" fill="#3f5b79" stroke="rgba(255,255,255,0.6)" stroke-width="1.5" paint-order="stroke" stroke-linejoin="round">AFRICA</text><text x="773.4" y="359.5" text-anchor="start" style="font:700 13.6px 'Liberation Sans';letter-spacing:0.8px" fill="#3f5b79" stroke="rgba(255,255,255,0.6)" stroke-width="1.5" paint-order="stroke" stroke-linejoin="round">OCEANIA</text><text x="512" y="318.4" text-anchor="middle" style="font:italic 700 13px 'Liberation Sans';letter-spacing:2.3px" fill="#fff" stroke="#94c0ca" stroke-width="1.6" paint-order="stroke">Indian</text><text x="512" y="333.5" text-anchor="middle" style="font:italic 700 13px 'Liberation Sans';letter-spacing:2.3px" fill="#fff" stroke="#94c0ca" stroke-width="1.6" paint-order="stroke">Ocean</text><circle cx="92.79999999999995" cy="156.7" r="20" fill="rgba(181,226,140,0.6)"/><circle cx="92.79999999999995" cy="156.7" r="15" fill="rgba(110,204,57,0.6)"/><text x="92.79999999999995" y="161.2" text-anchor="middle" style="font:700 12.5px 'Liberation Sans'" fill="#fff">4</text><circle cx="375.20000000000005" cy="64.5" r="20" fill="rgba(181,226,140,0.6)"/><circle cx="375.20000000000005" cy="64.5" r="15" fill="rgba(110,204,57,0.6)"/><text x="375.20000000000005" y="69.0" text-anchor="middle" style="font:700 12.5px 'Liberation Sans'" fill="#fff">2</text><circle cx="323.9000000000001" cy="135.3" r="20" fill="rgba(241,211,87,0.6)"/><circle cx="323.9000000000001" cy="135.3" r="15" fill="rgba(240,194,12,0.6)"/><text x="323.9000000000001" y="139.8" text-anchor="middle" style="font:700 12.5px 'Liberation Sans'" fill="#fff">17</text><circle cx="646.4000000000001" cy="357" r="20" fill="rgba(181,226,140,0.6)"/><circle cx="646.4000000000001" cy="357" r="15" fill="rgba(110,204,57,0.6)"/><text x="646.4000000000001" y="361.5" text-anchor="middle" style="font:700 12.5px 'Liberation Sans'" fill="#fff">2</text><path transform="translate(623,181.7)" fill="#4a5568" d="M13.5,0C6,0 0,6 0,13.5C0,23 13.5,39 13.5,39C13.5,39 27,23 27,13.5C27,6 21,0 13.5,0Z"/><circle cx="636.5" cy="195.39999999999998" r="5.2" fill="#fff"/><path transform="translate(712,389.9)" fill="#4a5568" d="M13.5,0C6,0 0,6 0,13.5C0,23 13.5,39 13.5,39C13.5,39 27,23 27,13.5C27,6 21,0 13.5,0Z"/><circle cx="725.5" cy="403.59999999999997" r="5.2" fill="#fff"/></svg><div style="position:absolute;left:10.5px;top:10px;width:33px;height:63px;border:2px solid #c3c0bb;border-radius:4px;background:#fff"><div style="position:absolute;left:0;top:30px;width:29px;height:1px;background:#ccc"></div><div style="position:absolute;left:8.7px;top:14.7px;width:12.6px;height:2.5px;background:#000"></div><div style="position:absolute;left:13.75px;top:9.7px;width:2.5px;height:12.4px;background:#000"></div><div style="position:absolute;left:9.2px;top:44.6px;width:12.6px;height:2.7px;background:#000"></div></div><div style="position:absolute;right:0;bottom:0;height:17px;padding:0 5px;background:rgba(255,255,255,0.8);border-top-left-radius:0;font:12px 'Liberation Sans';line-height:17px;color:#333;white-space:nowrap"><span style="color:#0078a8">Leaflet</span> <span style="color:#aaa">|</span> © <span style="color:#0078a8">OpenStreetMap</span> contributors © <span style="color:#0078a8">CARTO</span></div></div>
</body></html>
